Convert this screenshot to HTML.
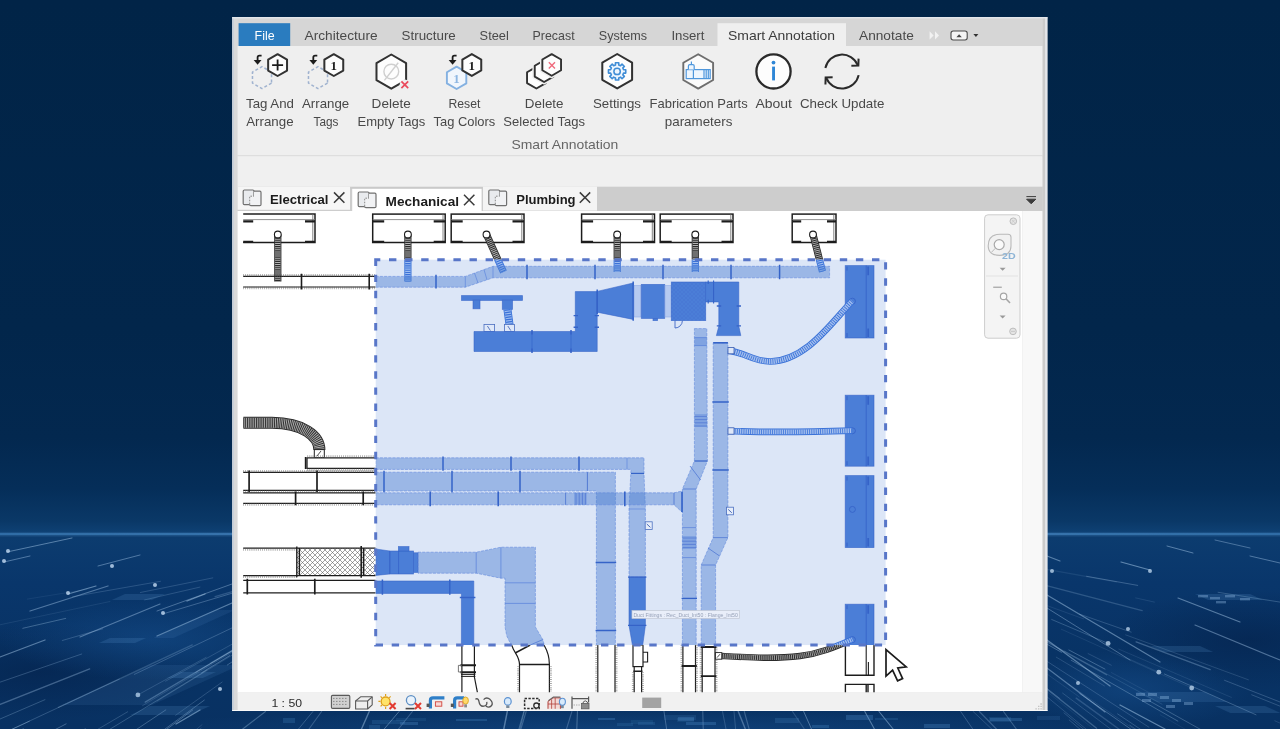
<!DOCTYPE html>
<html lang="en"><head><meta charset="utf-8"><title>Smart Annotation</title>
<style>
html,body{margin:0;padding:0;background:#03244a;overflow:hidden}
svg{display:block;font-family:"Liberation Sans", sans-serif}
</style></head><body>
<svg width="1280" height="729" viewBox="0 0 1280 729">
<defs>
<linearGradient id="bgv" x1="0" y1="0" x2="0" y2="1">
<stop offset="0" stop-color="#012447"/>
<stop offset="0.45" stop-color="#02264b"/>
<stop offset="0.60" stop-color="#03284f"/>
<stop offset="0.67" stop-color="#052e59"/>
<stop offset="0.715" stop-color="#0a3867"/>
<stop offset="0.729" stop-color="#0e4073"/>
<stop offset="0.7325" stop-color="#2a6298"/>
<stop offset="0.737" stop-color="#0c3c6f"/>
<stop offset="0.80" stop-color="#09366b"/>
<stop offset="0.9" stop-color="#083365"/>
<stop offset="1" stop-color="#083162"/>
</linearGradient>
<linearGradient id="hz" x1="0" y1="0" x2="1" y2="0">
<stop offset="0" stop-color="#3f86c4" stop-opacity="0.5"/>
<stop offset="0.5" stop-color="#5a9bd4" stop-opacity="0.7"/>
<stop offset="1" stop-color="#3f86c4" stop-opacity="0.5"/>
</linearGradient>
<radialGradient id="dk" cx="0.5" cy="0.5" r="0.5">
<stop offset="0" stop-color="#04214a" stop-opacity="0.6"/>
<stop offset="1" stop-color="#04214a" stop-opacity="0"/>
</radialGradient>
<radialGradient id="lt" cx="0.5" cy="0.5" r="0.5">
<stop offset="0" stop-color="#17508f" stop-opacity="0.5"/>
<stop offset="1" stop-color="#17508f" stop-opacity="0"/>
</radialGradient>
<filter id="b1"><feGaussianBlur stdDeviation="0.55"/></filter>
<filter id="b2"><feGaussianBlur stdDeviation="1.4"/></filter>
</defs>
<rect x="0" y="0" width="1280" height="729" fill="url(#bgv)"/>
<rect x="0" y="533.2" width="1280" height="1.6" fill="url(#hz)" filter="url(#b1)"/>
<ellipse cx="40" cy="672" rx="170" ry="48" fill="url(#dk)"/>
<ellipse cx="1250" cy="640" rx="150" ry="50" fill="url(#dk)"/>
<ellipse cx="150" cy="640" rx="150" ry="40" fill="url(#lt)"/>
<ellipse cx="1130" cy="690" rx="120" ry="40" fill="url(#lt)"/>
<ellipse cx="640" cy="729" rx="520" ry="20" fill="url(#lt)"/>
<g filter="url(#b1)"><line x1="192.3" y1="644.9" x2="58.4" y2="707.4" stroke="#a4c6e6" stroke-width="1.3" stroke-opacity="0.23" stroke-linecap="round"/><line x1="-126.8" y1="691.5" x2="-228.2" y2="720.2" stroke="#a4c6e6" stroke-width="1" stroke-opacity="0.13" stroke-linecap="round"/><line x1="-313.2" y1="692.6" x2="-452.5" y2="722.4" stroke="#a4c6e6" stroke-width="0.8" stroke-opacity="0.27" stroke-linecap="round"/><line x1="119.3" y1="679.1" x2="3.2" y2="733.3" stroke="#a4c6e6" stroke-width="0.8" stroke-opacity="0.33" stroke-linecap="round"/><circle cx="3.2" cy="733.3" r="1.6" fill="#c3dbf2" fill-opacity="0.75"/><line x1="244.3" y1="622.1" x2="134.3" y2="674.4" stroke="#a4c6e6" stroke-width="1" stroke-opacity="0.28" stroke-linecap="round"/><line x1="201.1" y1="728.2" x2="56.2" y2="851.1" stroke="#a4c6e6" stroke-width="1" stroke-opacity="0.19" stroke-linecap="round"/><line x1="44.9" y1="699.7" x2="-40.8" y2="736.6" stroke="#a4c6e6" stroke-width="0.8" stroke-opacity="0.34" stroke-linecap="round"/><circle cx="-40.8" cy="736.6" r="1.6" fill="#c3dbf2" fill-opacity="0.75"/><line x1="299.7" y1="618.2" x2="227.3" y2="665.0" stroke="#a4c6e6" stroke-width="1" stroke-opacity="0.32" stroke-linecap="round"/><line x1="110.0" y1="601.5" x2="-9.1" y2="626.7" stroke="#a4c6e6" stroke-width="0.8" stroke-opacity="0.14" stroke-linecap="round"/><line x1="-158.6" y1="626.8" x2="-237.9" y2="639.3" stroke="#a4c6e6" stroke-width="1" stroke-opacity="0.23" stroke-linecap="round"/><line x1="65.7" y1="618.4" x2="22.8" y2="628.3" stroke="#a4c6e6" stroke-width="1" stroke-opacity="0.34" stroke-linecap="round"/><line x1="85.5" y1="728.6" x2="56.6" y2="744.9" stroke="#a4c6e6" stroke-width="1" stroke-opacity="0.21" stroke-linecap="round"/><line x1="251.8" y1="587.3" x2="163.3" y2="613.8" stroke="#a4c6e6" stroke-width="1" stroke-opacity="0.33" stroke-linecap="round"/><line x1="212.8" y1="577.9" x2="140.4" y2="592.5" stroke="#a4c6e6" stroke-width="0.8" stroke-opacity="0.27" stroke-linecap="round"/><line x1="29.4" y1="721.2" x2="-78.5" y2="771.6" stroke="#a4c6e6" stroke-width="1" stroke-opacity="0.34" stroke-linecap="round"/><line x1="-258.3" y1="711.5" x2="-428.0" y2="755.3" stroke="#a4c6e6" stroke-width="1" stroke-opacity="0.30" stroke-linecap="round"/><line x1="244.0" y1="643.8" x2="145.2" y2="702.1" stroke="#a4c6e6" stroke-width="1.3" stroke-opacity="0.35" stroke-linecap="round"/><line x1="-59.0" y1="695.3" x2="-180.1" y2="735.3" stroke="#a4c6e6" stroke-width="1" stroke-opacity="0.25" stroke-linecap="round"/><line x1="229.8" y1="655.6" x2="201.7" y2="672.7" stroke="#a4c6e6" stroke-width="1" stroke-opacity="0.36" stroke-linecap="round"/><line x1="87.1" y1="589.4" x2="27.3" y2="599.1" stroke="#a4c6e6" stroke-width="0.8" stroke-opacity="0.11" stroke-linecap="round"/><line x1="66.1" y1="723.9" x2="25.0" y2="745.3" stroke="#a4c6e6" stroke-width="1" stroke-opacity="0.35" stroke-linecap="round"/><line x1="207.0" y1="670.0" x2="110.3" y2="729.0" stroke="#a4c6e6" stroke-width="1" stroke-opacity="0.27" stroke-linecap="round"/><line x1="-251.9" y1="652.3" x2="-283.8" y2="657.8" stroke="#a4c6e6" stroke-width="0.8" stroke-opacity="0.30" stroke-linecap="round"/><line x1="165.8" y1="709.9" x2="32.8" y2="798.5" stroke="#a4c6e6" stroke-width="1" stroke-opacity="0.32" stroke-linecap="round"/><line x1="89.7" y1="668.9" x2="-60.0" y2="728.2" stroke="#a4c6e6" stroke-width="1.3" stroke-opacity="0.36" stroke-linecap="round"/><circle cx="-60.0" cy="728.2" r="2.0" fill="#c3dbf2" fill-opacity="0.75"/><line x1="206.1" y1="657.4" x2="137.9" y2="694.9" stroke="#a4c6e6" stroke-width="0.8" stroke-opacity="0.27" stroke-linecap="round"/><circle cx="137.9" cy="694.9" r="2.4" fill="#c3dbf2" fill-opacity="0.75"/><line x1="199.9" y1="587.1" x2="144.6" y2="599.9" stroke="#a4c6e6" stroke-width="1" stroke-opacity="0.21" stroke-linecap="round"/><line x1="271.7" y1="622.1" x2="165.6" y2="681.2" stroke="#a4c6e6" stroke-width="0.8" stroke-opacity="0.25" stroke-linecap="round"/><line x1="271.7" y1="630.9" x2="157.1" y2="701.1" stroke="#a4c6e6" stroke-width="1" stroke-opacity="0.18" stroke-linecap="round"/><line x1="305.3" y1="570.4" x2="215.1" y2="596.7" stroke="#a4c6e6" stroke-width="1.3" stroke-opacity="0.24" stroke-linecap="round"/><line x1="222.1" y1="682.1" x2="175.6" y2="715.3" stroke="#a4c6e6" stroke-width="1" stroke-opacity="0.21" stroke-linecap="round"/><line x1="204.3" y1="700.1" x2="83.8" y2="788.8" stroke="#a4c6e6" stroke-width="1" stroke-opacity="0.33" stroke-linecap="round"/><circle cx="83.8" cy="788.8" r="2.0" fill="#c3dbf2" fill-opacity="0.75"/><line x1="262.8" y1="632.3" x2="210.6" y2="663.0" stroke="#a4c6e6" stroke-width="1.3" stroke-opacity="0.19" stroke-linecap="round"/><line x1="81.7" y1="654.0" x2="-30.8" y2="692.8" stroke="#a4c6e6" stroke-width="1" stroke-opacity="0.26" stroke-linecap="round"/><line x1="278.8" y1="623.3" x2="195.8" y2="672.3" stroke="#a4c6e6" stroke-width="1" stroke-opacity="0.37" stroke-linecap="round"/><line x1="102.7" y1="628.8" x2="62.3" y2="640.5" stroke="#a4c6e6" stroke-width="0.8" stroke-opacity="0.31" stroke-linecap="round"/><line x1="160.5" y1="581.3" x2="72.6" y2="596.7" stroke="#a4c6e6" stroke-width="1" stroke-opacity="0.21" stroke-linecap="round"/><line x1="127.6" y1="711.8" x2="44.9" y2="760.4" stroke="#a4c6e6" stroke-width="1" stroke-opacity="0.23" stroke-linecap="round"/><line x1="-53.6" y1="675.9" x2="-200.2" y2="718.9" stroke="#a4c6e6" stroke-width="0.8" stroke-opacity="0.16" stroke-linecap="round"/><line x1="202.0" y1="724.7" x2="101.9" y2="808.4" stroke="#a4c6e6" stroke-width="1" stroke-opacity="0.17" stroke-linecap="round"/><line x1="-193.8" y1="634.4" x2="-218.4" y2="638.4" stroke="#a4c6e6" stroke-width="1" stroke-opacity="0.25" stroke-linecap="round"/><line x1="-374.6" y1="690.8" x2="-428.2" y2="701.2" stroke="#a4c6e6" stroke-width="1" stroke-opacity="0.29" stroke-linecap="round"/><line x1="23.3" y1="729.0" x2="-159.0" y2="816.4" stroke="#a4c6e6" stroke-width="1.3" stroke-opacity="0.36" stroke-linecap="round"/><line x1="256.1" y1="637.9" x2="142.6" y2="705.6" stroke="#a4c6e6" stroke-width="1" stroke-opacity="0.19" stroke-linecap="round"/><line x1="192.7" y1="710.0" x2="140.5" y2="748.7" stroke="#a4c6e6" stroke-width="1" stroke-opacity="0.37" stroke-linecap="round"/><line x1="1088.1" y1="653.6" x2="1111.3" y2="665.2" stroke="#a4c6e6" stroke-width="0.8" stroke-opacity="0.24" stroke-linecap="round"/><line x1="1006.9" y1="645.5" x2="1079.2" y2="696.9" stroke="#a4c6e6" stroke-width="1" stroke-opacity="0.12" stroke-linecap="round"/><line x1="1274.8" y1="720.8" x2="1458.6" y2="801.6" stroke="#a4c6e6" stroke-width="1" stroke-opacity="0.17" stroke-linecap="round"/><line x1="1304.1" y1="710.1" x2="1486.3" y2="780.8" stroke="#a4c6e6" stroke-width="1.3" stroke-opacity="0.25" stroke-linecap="round"/><circle cx="1486.3" cy="780.8" r="2.0" fill="#c3dbf2" fill-opacity="0.75"/><line x1="1160.2" y1="714.7" x2="1204.9" y2="740.7" stroke="#a4c6e6" stroke-width="0.8" stroke-opacity="0.11" stroke-linecap="round"/><line x1="1218.1" y1="592.3" x2="1307.2" y2="606.4" stroke="#a4c6e6" stroke-width="1" stroke-opacity="0.27" stroke-linecap="round"/><circle cx="1307.2" cy="606.4" r="2.4" fill="#c3dbf2" fill-opacity="0.75"/><line x1="1149.0" y1="700.7" x2="1266.7" y2="766.3" stroke="#a4c6e6" stroke-width="1" stroke-opacity="0.30" stroke-linecap="round"/><line x1="1601.2" y1="658.9" x2="1742.4" y2="682.4" stroke="#a4c6e6" stroke-width="1" stroke-opacity="0.25" stroke-linecap="round"/><line x1="1068.9" y1="650.0" x2="1105.0" y2="669.1" stroke="#a4c6e6" stroke-width="1" stroke-opacity="0.35" stroke-linecap="round"/><line x1="1336.5" y1="714.2" x2="1400.1" y2="737.8" stroke="#a4c6e6" stroke-width="1" stroke-opacity="0.35" stroke-linecap="round"/><line x1="1299.6" y1="676.8" x2="1361.8" y2="696.5" stroke="#a4c6e6" stroke-width="0.8" stroke-opacity="0.22" stroke-linecap="round"/><line x1="1111.4" y1="672.6" x2="1160.0" y2="698.4" stroke="#a4c6e6" stroke-width="0.8" stroke-opacity="0.13" stroke-linecap="round"/><line x1="1251.7" y1="694.8" x2="1332.8" y2="727.3" stroke="#a4c6e6" stroke-width="1" stroke-opacity="0.24" stroke-linecap="round"/><line x1="1470.7" y1="643.4" x2="1560.3" y2="659.2" stroke="#a4c6e6" stroke-width="1.3" stroke-opacity="0.14" stroke-linecap="round"/><line x1="1411.9" y1="698.5" x2="1600.6" y2="753.7" stroke="#a4c6e6" stroke-width="0.8" stroke-opacity="0.26" stroke-linecap="round"/><line x1="1051.7" y1="619.5" x2="1108.1" y2="643.4" stroke="#a4c6e6" stroke-width="1" stroke-opacity="0.27" stroke-linecap="round"/><circle cx="1108.1" cy="643.4" r="2.4" fill="#c3dbf2" fill-opacity="0.75"/><line x1="1086.6" y1="576.3" x2="1137.7" y2="585.4" stroke="#a4c6e6" stroke-width="1" stroke-opacity="0.31" stroke-linecap="round"/><line x1="1935.9" y1="708.6" x2="2104.3" y2="735.7" stroke="#a4c6e6" stroke-width="1.3" stroke-opacity="0.26" stroke-linecap="round"/><line x1="973.6" y1="603.1" x2="1061.5" y2="652.3" stroke="#a4c6e6" stroke-width="1" stroke-opacity="0.36" stroke-linecap="round"/><line x1="1079.8" y1="693.6" x2="1157.3" y2="747.5" stroke="#a4c6e6" stroke-width="1" stroke-opacity="0.35" stroke-linecap="round"/><line x1="1068.5" y1="684.2" x2="1143.5" y2="735.7" stroke="#a4c6e6" stroke-width="1" stroke-opacity="0.12" stroke-linecap="round"/><line x1="1056.3" y1="657.2" x2="1104.4" y2="685.9" stroke="#a4c6e6" stroke-width="1" stroke-opacity="0.19" stroke-linecap="round"/><line x1="1042.9" y1="639.8" x2="1106.6" y2="674.8" stroke="#a4c6e6" stroke-width="1.3" stroke-opacity="0.28" stroke-linecap="round"/><line x1="1129.8" y1="725.2" x2="1157.5" y2="744.1" stroke="#a4c6e6" stroke-width="0.8" stroke-opacity="0.31" stroke-linecap="round"/><line x1="989.1" y1="643.1" x2="1059.9" y2="698.5" stroke="#a4c6e6" stroke-width="0.8" stroke-opacity="0.28" stroke-linecap="round"/><line x1="1431.0" y1="652.1" x2="1557.8" y2="677.9" stroke="#a4c6e6" stroke-width="0.8" stroke-opacity="0.21" stroke-linecap="round"/><line x1="1300.5" y1="723.3" x2="1475.5" y2="796.8" stroke="#a4c6e6" stroke-width="0.8" stroke-opacity="0.22" stroke-linecap="round"/><line x1="1079.5" y1="614.1" x2="1131.1" y2="632.1" stroke="#a4c6e6" stroke-width="1" stroke-opacity="0.24" stroke-linecap="round"/><line x1="1013.3" y1="664.7" x2="1118.9" y2="749.3" stroke="#a4c6e6" stroke-width="0.8" stroke-opacity="0.10" stroke-linecap="round"/><line x1="1038.4" y1="567.9" x2="1116.3" y2="581.9" stroke="#a4c6e6" stroke-width="1.3" stroke-opacity="0.11" stroke-linecap="round"/><line x1="1118.7" y1="649.1" x2="1231.4" y2="697.4" stroke="#a4c6e6" stroke-width="1" stroke-opacity="0.12" stroke-linecap="round"/><line x1="1061.3" y1="629.2" x2="1191.7" y2="688.0" stroke="#a4c6e6" stroke-width="1" stroke-opacity="0.11" stroke-linecap="round"/><circle cx="1191.7" cy="688.0" r="2.4" fill="#c3dbf2" fill-opacity="0.75"/><line x1="1281.9" y1="672.9" x2="1312.1" y2="682.6" stroke="#a4c6e6" stroke-width="1.3" stroke-opacity="0.23" stroke-linecap="round"/><line x1="1412.5" y1="638.9" x2="1448.9" y2="645.7" stroke="#a4c6e6" stroke-width="1.3" stroke-opacity="0.14" stroke-linecap="round"/><line x1="1071.1" y1="660.2" x2="1177.8" y2="721.1" stroke="#a4c6e6" stroke-width="1" stroke-opacity="0.32" stroke-linecap="round"/><line x1="1069.2" y1="720.0" x2="1195.1" y2="826.7" stroke="#a4c6e6" stroke-width="1" stroke-opacity="0.23" stroke-linecap="round"/><line x1="1125.7" y1="634.9" x2="1248.4" y2="679.8" stroke="#a4c6e6" stroke-width="1" stroke-opacity="0.18" stroke-linecap="round"/><line x1="1064.5" y1="651.0" x2="1162.0" y2="704.2" stroke="#a4c6e6" stroke-width="1" stroke-opacity="0.15" stroke-linecap="round"/><line x1="1064.0" y1="712.9" x2="1207.7" y2="833.0" stroke="#a4c6e6" stroke-width="0.8" stroke-opacity="0.28" stroke-linecap="round"/><circle cx="1207.7" cy="833.0" r="2.0" fill="#c3dbf2" fill-opacity="0.75"/><line x1="1124.9" y1="657.1" x2="1158.8" y2="672.2" stroke="#a4c6e6" stroke-width="1" stroke-opacity="0.12" stroke-linecap="round"/><circle cx="1158.8" cy="672.2" r="2.4" fill="#c3dbf2" fill-opacity="0.75"/><line x1="1036.0" y1="582.8" x2="1142.2" y2="610.7" stroke="#a4c6e6" stroke-width="1.3" stroke-opacity="0.23" stroke-linecap="round"/><line x1="1224.5" y1="680.3" x2="1372.4" y2="738.1" stroke="#a4c6e6" stroke-width="0.8" stroke-opacity="0.32" stroke-linecap="round"/><line x1="1076.2" y1="698.1" x2="1204.4" y2="791.1" stroke="#a4c6e6" stroke-width="1.3" stroke-opacity="0.22" stroke-linecap="round"/><line x1="1117.6" y1="713.9" x2="1205.4" y2="772.9" stroke="#a4c6e6" stroke-width="1" stroke-opacity="0.26" stroke-linecap="round"/><line x1="1136.1" y1="641.8" x2="1210.2" y2="669.7" stroke="#a4c6e6" stroke-width="1.3" stroke-opacity="0.33" stroke-linecap="round"/><line x1="1001.5" y1="653.3" x2="1096.6" y2="728.2" stroke="#a4c6e6" stroke-width="1.3" stroke-opacity="0.30" stroke-linecap="round"/><line x1="1024.4" y1="646.7" x2="1148.9" y2="727.2" stroke="#a4c6e6" stroke-width="1" stroke-opacity="0.22" stroke-linecap="round"/><line x1="1028.0" y1="598.7" x2="1083.7" y2="618.9" stroke="#a4c6e6" stroke-width="1" stroke-opacity="0.12" stroke-linecap="round"/><line x1="1648.8" y1="667.3" x2="1759.3" y2="685.7" stroke="#a4c6e6" stroke-width="1" stroke-opacity="0.31" stroke-linecap="round"/><line x1="1062.6" y1="693.1" x2="1113.1" y2="730.9" stroke="#a4c6e6" stroke-width="0.8" stroke-opacity="0.25" stroke-linecap="round"/><line x1="1005.3" y1="662.4" x2="1115.0" y2="753.0" stroke="#a4c6e6" stroke-width="0.8" stroke-opacity="0.26" stroke-linecap="round"/><line x1="1135.7" y1="597.9" x2="1154.4" y2="602.1" stroke="#a4c6e6" stroke-width="1" stroke-opacity="0.13" stroke-linecap="round"/><line x1="1164.4" y1="674.0" x2="1256.0" y2="714.8" stroke="#a4c6e6" stroke-width="1" stroke-opacity="0.31" stroke-linecap="round"/><line x1="1338.9" y1="722.9" x2="1483.6" y2="778.9" stroke="#a4c6e6" stroke-width="1.3" stroke-opacity="0.24" stroke-linecap="round"/><line x1="72.0" y1="538.0" x2="7.0" y2="552.0" stroke="#a4c6e6" stroke-width="1" stroke-opacity="0.50" stroke-linecap="round"/><line x1="30.0" y1="556.0" x2="4.0" y2="562.0" stroke="#a4c6e6" stroke-width="1" stroke-opacity="0.45" stroke-linecap="round"/><line x1="140.0" y1="555.0" x2="98.0" y2="566.0" stroke="#a4c6e6" stroke-width="1" stroke-opacity="0.45" stroke-linecap="round"/><line x1="96.0" y1="586.0" x2="68.0" y2="594.0" stroke="#a4c6e6" stroke-width="1.2" stroke-opacity="0.55" stroke-linecap="round"/><line x1="108.0" y1="586.0" x2="30.0" y2="611.0" stroke="#a4c6e6" stroke-width="1.3" stroke-opacity="0.45" stroke-linecap="round"/><line x1="232.0" y1="584.0" x2="157.0" y2="611.0" stroke="#a4c6e6" stroke-width="1" stroke-opacity="0.40" stroke-linecap="round"/><line x1="205.0" y1="594.0" x2="187.0" y2="601.0" stroke="#a4c6e6" stroke-width="1.3" stroke-opacity="0.55" stroke-linecap="round"/><line x1="232.0" y1="603.0" x2="157.0" y2="636.0" stroke="#a4c6e6" stroke-width="1.3" stroke-opacity="0.50" stroke-linecap="round"/><line x1="160.0" y1="604.0" x2="80.0" y2="637.0" stroke="#a4c6e6" stroke-width="1.2" stroke-opacity="0.45" stroke-linecap="round"/><line x1="45.0" y1="640.0" x2="0.0" y2="657.0" stroke="#a4c6e6" stroke-width="1.3" stroke-opacity="0.50" stroke-linecap="round"/><line x1="200.0" y1="710.0" x2="176.0" y2="724.0" stroke="#a4c6e6" stroke-width="1.3" stroke-opacity="0.55" stroke-linecap="round"/><circle cx="8.0" cy="551.0" r="2.0" fill="#c3dbf2" fill-opacity="0.8"/><circle cx="4.0" cy="561.0" r="2.0" fill="#c3dbf2" fill-opacity="0.8"/><circle cx="112.0" cy="566.0" r="2.0" fill="#c3dbf2" fill-opacity="0.8"/><circle cx="68.0" cy="593.0" r="2.0" fill="#c3dbf2" fill-opacity="0.8"/><circle cx="155.0" cy="585.0" r="2.0" fill="#c3dbf2" fill-opacity="0.8"/><circle cx="163.0" cy="613.0" r="2.0" fill="#c3dbf2" fill-opacity="0.8"/><circle cx="220.0" cy="689.0" r="2.0" fill="#c3dbf2" fill-opacity="0.8"/><line x1="1167.0" y1="546.0" x2="1193.0" y2="553.0" stroke="#a4c6e6" stroke-width="1" stroke-opacity="0.50" stroke-linecap="round"/><line x1="1121.0" y1="562.0" x2="1150.0" y2="570.0" stroke="#a4c6e6" stroke-width="1.2" stroke-opacity="0.55" stroke-linecap="round"/><line x1="1047.0" y1="556.0" x2="1060.0" y2="561.0" stroke="#a4c6e6" stroke-width="1.2" stroke-opacity="0.50" stroke-linecap="round"/><line x1="1047.0" y1="595.0" x2="1160.0" y2="662.0" stroke="#a4c6e6" stroke-width="1.2" stroke-opacity="0.50" stroke-linecap="round"/><line x1="1047.0" y1="608.0" x2="1130.0" y2="660.0" stroke="#a4c6e6" stroke-width="1" stroke-opacity="0.40" stroke-linecap="round"/><line x1="1178.0" y1="598.0" x2="1240.0" y2="622.0" stroke="#a4c6e6" stroke-width="1.2" stroke-opacity="0.50" stroke-linecap="round"/><line x1="1195.0" y1="625.0" x2="1280.0" y2="660.0" stroke="#a4c6e6" stroke-width="1.2" stroke-opacity="0.45" stroke-linecap="round"/><line x1="1047.0" y1="640.0" x2="1110.0" y2="686.0" stroke="#a4c6e6" stroke-width="1.3" stroke-opacity="0.50" stroke-linecap="round"/><line x1="1047.0" y1="668.0" x2="1105.0" y2="712.0" stroke="#a4c6e6" stroke-width="1.2" stroke-opacity="0.45" stroke-linecap="round"/><line x1="1120.0" y1="705.0" x2="1165.0" y2="729.0" stroke="#a4c6e6" stroke-width="1.3" stroke-opacity="0.55" stroke-linecap="round"/><line x1="1250.0" y1="556.0" x2="1280.0" y2="563.0" stroke="#a4c6e6" stroke-width="1" stroke-opacity="0.45" stroke-linecap="round"/><line x1="1215.0" y1="540.0" x2="1250.0" y2="548.0" stroke="#a4c6e6" stroke-width="1" stroke-opacity="0.40" stroke-linecap="round"/><circle cx="1150.0" cy="571.0" r="2.0" fill="#c3dbf2" fill-opacity="0.75"/><circle cx="1128.0" cy="629.0" r="2.0" fill="#c3dbf2" fill-opacity="0.75"/><circle cx="1078.0" cy="683.0" r="2.0" fill="#c3dbf2" fill-opacity="0.75"/><circle cx="1052.0" cy="571.0" r="2.0" fill="#c3dbf2" fill-opacity="0.75"/><polygon points="125,594 165,594 151.8,600 111.8,600" fill="#6aa6de" fill-opacity="0.16"/><polygon points="110,638 146,638 135.0,643 99.0,643" fill="#6aa6de" fill-opacity="0.16"/><polygon points="150,665 240,665 152.0,705 62.0,705" fill="#6aa6de" fill-opacity="0.1"/><polygon points="180,672 216,672 202.8,678 166.8,678" fill="#6aa6de" fill-opacity="0.16"/><polygon points="150,706 210,706 190.2,715 130.2,715" fill="#6aa6de" fill-opacity="0.16"/><polygon points="215,610 235,610 173.4,638 153.4,638" fill="#6aa6de" fill-opacity="0.1"/><polygon points="1195,594 1250,594 1263.2,600 1208.2,600" fill="#6aa6de" fill-opacity="0.16"/><polygon points="1150,646 1200,646 1213.2,652 1163.2,652" fill="#6aa6de" fill-opacity="0.16"/><polygon points="1135,692 1205,692 1227.0,702 1157.0,702" fill="#6aa6de" fill-opacity="0.14"/><polygon points="1215,706 1265,706 1280.4,713 1230.4,713" fill="#6aa6de" fill-opacity="0.16"/><rect x="1136" y="693" width="9" height="3" fill="#9cc4ea" fill-opacity="0.35"/><rect x="1148" y="693" width="9" height="3" fill="#9cc4ea" fill-opacity="0.35"/><rect x="1160" y="696" width="9" height="3" fill="#9cc4ea" fill-opacity="0.35"/><rect x="1172" y="699" width="9" height="3" fill="#9cc4ea" fill-opacity="0.35"/><rect x="1142" y="699" width="9" height="3" fill="#9cc4ea" fill-opacity="0.35"/><rect x="1184" y="702" width="9" height="3" fill="#9cc4ea" fill-opacity="0.35"/><rect x="1166" y="705" width="9" height="3" fill="#9cc4ea" fill-opacity="0.35"/><rect x="1198" y="595" width="10" height="2.4" fill="#9cc4ea" fill-opacity="0.35"/><rect x="1210" y="597" width="10" height="2.4" fill="#9cc4ea" fill-opacity="0.35"/><rect x="1225" y="595" width="10" height="2.4" fill="#9cc4ea" fill-opacity="0.35"/><rect x="1240" y="598" width="10" height="2.4" fill="#9cc4ea" fill-opacity="0.35"/><rect x="1216" y="601" width="10" height="2.4" fill="#9cc4ea" fill-opacity="0.35"/><line x1="738.3" y1="711.5" x2="745.3" y2="729.0" stroke="#a4c6e6" stroke-width="1.4" stroke-opacity="0.40" stroke-linecap="round"/><line x1="664.0" y1="711.5" x2="666.6" y2="729.0" stroke="#a4c6e6" stroke-width="0.9" stroke-opacity="0.39" stroke-linecap="round"/><line x1="960.7" y1="711.5" x2="972.7" y2="729.0" stroke="#a4c6e6" stroke-width="0.9" stroke-opacity="0.31" stroke-linecap="round"/><line x1="321.6" y1="711.5" x2="309.0" y2="729.0" stroke="#a4c6e6" stroke-width="1.1" stroke-opacity="0.28" stroke-linecap="round"/><line x1="973.1" y1="711.5" x2="991.7" y2="729.0" stroke="#a4c6e6" stroke-width="0.9" stroke-opacity="0.24" stroke-linecap="round"/><line x1="734.0" y1="711.5" x2="735.6" y2="729.0" stroke="#a4c6e6" stroke-width="0.9" stroke-opacity="0.26" stroke-linecap="round"/><line x1="412.4" y1="711.5" x2="398.5" y2="729.0" stroke="#a4c6e6" stroke-width="1.1" stroke-opacity="0.29" stroke-linecap="round"/><line x1="399.1" y1="711.5" x2="384.2" y2="729.0" stroke="#a4c6e6" stroke-width="0.9" stroke-opacity="0.48" stroke-linecap="round"/><line x1="792.5" y1="711.5" x2="804.3" y2="729.0" stroke="#a4c6e6" stroke-width="1.1" stroke-opacity="0.21" stroke-linecap="round"/><line x1="571.9" y1="711.5" x2="566.5" y2="729.0" stroke="#a4c6e6" stroke-width="1.1" stroke-opacity="0.29" stroke-linecap="round"/><line x1="722.5" y1="711.5" x2="726.0" y2="729.0" stroke="#a4c6e6" stroke-width="1.1" stroke-opacity="0.22" stroke-linecap="round"/><line x1="524.3" y1="711.5" x2="519.9" y2="729.0" stroke="#a4c6e6" stroke-width="0.9" stroke-opacity="0.34" stroke-linecap="round"/><line x1="803.7" y1="711.5" x2="811.5" y2="729.0" stroke="#a4c6e6" stroke-width="0.9" stroke-opacity="0.48" stroke-linecap="round"/><line x1="526.1" y1="711.5" x2="520.9" y2="729.0" stroke="#a4c6e6" stroke-width="1.1" stroke-opacity="0.31" stroke-linecap="round"/><line x1="702.8" y1="711.5" x2="703.2" y2="729.0" stroke="#a4c6e6" stroke-width="0.9" stroke-opacity="0.39" stroke-linecap="round"/><line x1="1003.5" y1="711.5" x2="1016.3" y2="729.0" stroke="#a4c6e6" stroke-width="1.1" stroke-opacity="0.30" stroke-linecap="round"/><line x1="523.8" y1="711.5" x2="518.9" y2="729.0" stroke="#a4c6e6" stroke-width="0.9" stroke-opacity="0.38" stroke-linecap="round"/><line x1="864.8" y1="711.5" x2="874.4" y2="729.0" stroke="#a4c6e6" stroke-width="1.1" stroke-opacity="0.48" stroke-linecap="round"/><line x1="312.9" y1="711.5" x2="298.5" y2="729.0" stroke="#a4c6e6" stroke-width="0.9" stroke-opacity="0.30" stroke-linecap="round"/><line x1="979.4" y1="711.5" x2="996.4" y2="729.0" stroke="#a4c6e6" stroke-width="1.1" stroke-opacity="0.29" stroke-linecap="round"/><line x1="879.0" y1="711.5" x2="893.1" y2="729.0" stroke="#a4c6e6" stroke-width="1.1" stroke-opacity="0.50" stroke-linecap="round"/><line x1="369.2" y1="711.5" x2="361.5" y2="729.0" stroke="#a4c6e6" stroke-width="1.4" stroke-opacity="0.48" stroke-linecap="round"/><line x1="265.5" y1="711.5" x2="242.7" y2="729.0" stroke="#a4c6e6" stroke-width="1.1" stroke-opacity="0.34" stroke-linecap="round"/><line x1="577.4" y1="711.5" x2="576.8" y2="729.0" stroke="#a4c6e6" stroke-width="0.9" stroke-opacity="0.44" stroke-linecap="round"/><line x1="507.3" y1="711.5" x2="503.8" y2="729.0" stroke="#a4c6e6" stroke-width="1.4" stroke-opacity="0.48" stroke-linecap="round"/><line x1="744.3" y1="711.5" x2="749.1" y2="729.0" stroke="#a4c6e6" stroke-width="1.1" stroke-opacity="0.31" stroke-linecap="round"/><rect x="283" y="718" width="12" height="5" fill="#4f8fcc" fill-opacity="0.23"/><rect x="372" y="720" width="33" height="4" fill="#4f8fcc" fill-opacity="0.18"/><rect x="456" y="719" width="31" height="2" fill="#4f8fcc" fill-opacity="0.27"/><rect x="664" y="715" width="32" height="5" fill="#4f8fcc" fill-opacity="0.15"/><rect x="631" y="720" width="22" height="4" fill="#4f8fcc" fill-opacity="0.13"/><rect x="875" y="718" width="23" height="2" fill="#4f8fcc" fill-opacity="0.18"/><rect x="686" y="722" width="30" height="3" fill="#4f8fcc" fill-opacity="0.30"/><rect x="812" y="725" width="17" height="3" fill="#4f8fcc" fill-opacity="0.27"/><rect x="617" y="723" width="16" height="3" fill="#4f8fcc" fill-opacity="0.17"/><rect x="638" y="722" width="17" height="3" fill="#4f8fcc" fill-opacity="0.18"/><rect x="990" y="718" width="32" height="3" fill="#4f8fcc" fill-opacity="0.28"/><rect x="598" y="718" width="17" height="2" fill="#4f8fcc" fill-opacity="0.30"/><rect x="396" y="718" width="30" height="3" fill="#4f8fcc" fill-opacity="0.13"/><rect x="775" y="718" width="24" height="5" fill="#4f8fcc" fill-opacity="0.21"/><rect x="989" y="717" width="22" height="5" fill="#4f8fcc" fill-opacity="0.17"/><rect x="1037" y="716" width="23" height="4" fill="#4f8fcc" fill-opacity="0.15"/><rect x="846" y="715" width="27" height="5" fill="#4f8fcc" fill-opacity="0.30"/><rect x="369" y="725" width="11" height="5" fill="#4f8fcc" fill-opacity="0.21"/><rect x="677" y="718" width="17" height="4" fill="#4f8fcc" fill-opacity="0.13"/><rect x="400" y="722" width="18" height="3" fill="#4f8fcc" fill-opacity="0.29"/><rect x="924" y="724" width="26" height="4" fill="#4f8fcc" fill-opacity="0.29"/><rect x="678" y="717" width="16" height="4" fill="#4f8fcc" fill-opacity="0.29"/></g>
<defs><filter id="soft" x="-2%" y="-2%" width="104%" height="104%"><feGaussianBlur stdDeviation="0.65"/></filter></defs>
<g filter="url(#soft)">
<g id="window">
<rect x="232.2" y="17.1" width="815.2" height="693.9" fill="#d9d9d9"/>
<rect x="232.2" y="17.1" width="1.8" height="693.9" fill="#c9d1db"/>
<rect x="1042.4" y="17.1" width="2.8" height="693.9" fill="#cbcbcb"/>
<rect x="1045.2" y="17.1" width="2.2" height="693.9" fill="#e4e6ea"/>
<rect x="237.6" y="17.1" width="804.8" height="28.9" fill="#d6d6d6"/>
<rect x="232.2" y="17.1" width="815.2" height="1.3" fill="#e4e8ee"/>
<rect x="238.6" y="23.2" width="51.6" height="22.8" fill="#2b7cbf"/>
<rect x="717.5" y="23.2" width="128.5" height="23" fill="#efefef"/>
<rect x="237.6" y="46" width="804.8" height="109.6" fill="#efefef"/>
<rect x="237.6" y="155.2" width="804.8" height="1" fill="#dcdcdc"/>
<rect x="237.6" y="156.2" width="804.8" height="30.6" fill="#f0f0f0"/>
<rect x="237.6" y="186.8" width="804.8" height="24.4" fill="#cdcdcd"/>
<rect x="237.6" y="186.6" width="112.4" height="23.2" fill="#f6f6f6"/>
<rect x="483" y="186.6" width="114" height="24" fill="#f4f4f4"/>
<rect x="352.2" y="188.4" width="129.4" height="23" fill="#ffffff"/>
<rect x="351.4" y="187.6" width="131" height="1" fill="#c4c4c4"/>
<rect x="237.6" y="211" width="784.8" height="481.6" fill="#ffffff"/>
<rect x="1022.4" y="211" width="20" height="481.6" fill="#f8f8f8"/>
<rect x="237.6" y="692.4" width="804.8" height="18.6" fill="#f1f1f1"/>
<rect x="232.2" y="710" width="815.2" height="1" fill="#fafafa"/>
<text x="254.6" y="40.4" font-size="13.4" fill="#ffffff" font-weight="normal" text-anchor="start" textLength="20.0" lengthAdjust="spacingAndGlyphs">File</text>
<text x="304.6" y="40.4" font-size="13.4" fill="#4a4a4a" font-weight="normal" text-anchor="start" textLength="73.0" lengthAdjust="spacingAndGlyphs">Architecture</text>
<text x="401.6" y="40.4" font-size="13.4" fill="#4a4a4a" font-weight="normal" text-anchor="start" textLength="54.2" lengthAdjust="spacingAndGlyphs">Structure</text>
<text x="479.6" y="40.4" font-size="13.4" fill="#4a4a4a" font-weight="normal" text-anchor="start" textLength="29.2" lengthAdjust="spacingAndGlyphs">Steel</text>
<text x="532.6" y="40.4" font-size="13.4" fill="#4a4a4a" font-weight="normal" text-anchor="start" textLength="42.0" lengthAdjust="spacingAndGlyphs">Precast</text>
<text x="598.8" y="40.4" font-size="13.4" fill="#4a4a4a" font-weight="normal" text-anchor="start" textLength="48.2" lengthAdjust="spacingAndGlyphs">Systems</text>
<text x="671.4" y="40.4" font-size="13.4" fill="#4a4a4a" font-weight="normal" text-anchor="start" textLength="33.0" lengthAdjust="spacingAndGlyphs">Insert</text>
<text x="728.0" y="40.4" font-size="13.4" fill="#3c3c3c" font-weight="normal" text-anchor="start" textLength="107.0" lengthAdjust="spacingAndGlyphs">Smart Annotation</text>
<text x="859.0" y="40.4" font-size="13.4" fill="#4a4a4a" font-weight="normal" text-anchor="start" textLength="54.8" lengthAdjust="spacingAndGlyphs">Annotate</text>
<path d="M929.6 31.2 l4 4.2 l-4 4.2 z M935 31.2 l4 4.2 l-4 4.2 z" fill="#f2f2f2"/>
<rect x="951" y="31" width="16.2" height="9" rx="2.2" fill="#f4f4f4" stroke="#4a4a4a" stroke-width="1.1"/>
<path d="M956.4 37.2 l2.7 -3 l2.7 3 z" fill="#444"/>
<path d="M973.4 34 h5 l-2.5 3 z" fill="#333"/>
<rect x="243.2" y="190" width="10.8" height="14.6" rx="1.2" fill="#e9ebee" stroke="#707070" stroke-width="1.2"/>
<path d="M254.0 191.2 H261.0 V205.6 H249.7 V196.2 H254.0 Z" fill="#f1f2f4"/>
<path d="M254.0 191.2 H259.8 q1.2 0 1.2 1.2 V204.4 q0 1.2 -1.2 1.2 H250.9 q-1.2 0 -1.2 -1.2" fill="none" stroke="#707070" stroke-width="1.2"/>
<path d="M249.7 204.2 V196.2 H254.0" stroke="#8a8a8a" stroke-width="1" stroke-dasharray="1.6 1.3" fill="none"/>
<text x="270.0" y="203.8" font-size="13.6" fill="#1a1a1a" font-weight="bold" text-anchor="start" textLength="58.4" lengthAdjust="spacingAndGlyphs">Electrical</text>
<path d="M334 192.4 l10.4 10.4 M344.4 192.4 l-10.4 10.4" stroke="#3a3a3a" stroke-width="1.5" fill="none"/>
<rect x="358.2" y="192" width="10.8" height="14.6" rx="1.2" fill="#e9ebee" stroke="#707070" stroke-width="1.2"/>
<path d="M369.0 193.2 H376.0 V207.6 H364.7 V198.2 H369.0 Z" fill="#f1f2f4"/>
<path d="M369.0 193.2 H374.8 q1.2 0 1.2 1.2 V206.4 q0 1.2 -1.2 1.2 H365.9 q-1.2 0 -1.2 -1.2" fill="none" stroke="#707070" stroke-width="1.2"/>
<path d="M364.7 206.2 V198.2 H369.0" stroke="#8a8a8a" stroke-width="1" stroke-dasharray="1.6 1.3" fill="none"/>
<text x="385.6" y="206.0" font-size="13.6" fill="#1a1a1a" font-weight="bold" text-anchor="start" textLength="73.4" lengthAdjust="spacingAndGlyphs">Mechanical</text>
<path d="M464 194.8 l10.4 10.4 M474.4 194.8 l-10.4 10.4" stroke="#3a3a3a" stroke-width="1.5" fill="none"/>
<rect x="488.8" y="190" width="10.8" height="14.6" rx="1.2" fill="#e9ebee" stroke="#707070" stroke-width="1.2"/>
<path d="M499.6 191.2 H506.6 V205.6 H495.3 V196.2 H499.6 Z" fill="#f1f2f4"/>
<path d="M499.6 191.2 H505.4 q1.2 0 1.2 1.2 V204.4 q0 1.2 -1.2 1.2 H496.5 q-1.2 0 -1.2 -1.2" fill="none" stroke="#707070" stroke-width="1.2"/>
<path d="M495.3 204.2 V196.2 H499.6" stroke="#8a8a8a" stroke-width="1" stroke-dasharray="1.6 1.3" fill="none"/>
<text x="516.2" y="203.8" font-size="13.6" fill="#1a1a1a" font-weight="bold" text-anchor="start" textLength="59.4" lengthAdjust="spacingAndGlyphs">Plumbing</text>
<path d="M579.8 192.4 l10.4 10.4 M590.1999999999999 192.4 l-10.4 10.4" stroke="#3a3a3a" stroke-width="1.5" fill="none"/>
<path d="M1026.4 196.6 h9.6 M1026.6 199.2 h9.2 l-4.6 4.6 z" stroke="#3a3a3a" stroke-width="1" fill="#3a3a3a"/>
</g>
<g id="ribbon">
<text x="246.0" y="107.8" font-size="12.6" fill="#484848" font-weight="normal" text-anchor="start" textLength="48.0" lengthAdjust="spacingAndGlyphs">Tag And</text>
<text x="246.2" y="126.3" font-size="12.6" fill="#484848" font-weight="normal" text-anchor="start" textLength="47.4" lengthAdjust="spacingAndGlyphs">Arrange</text>
<text x="302.0" y="107.8" font-size="12.6" fill="#484848" font-weight="normal" text-anchor="start" textLength="47.2" lengthAdjust="spacingAndGlyphs">Arrange</text>
<text x="313.6" y="126.3" font-size="12.6" fill="#484848" font-weight="normal" text-anchor="start" textLength="24.9" lengthAdjust="spacingAndGlyphs">Tags</text>
<text x="371.6" y="107.8" font-size="12.6" fill="#484848" font-weight="normal" text-anchor="start" textLength="39.2" lengthAdjust="spacingAndGlyphs">Delete</text>
<text x="357.5" y="126.3" font-size="12.6" fill="#484848" font-weight="normal" text-anchor="start" textLength="67.8" lengthAdjust="spacingAndGlyphs">Empty Tags</text>
<text x="448.5" y="107.8" font-size="12.6" fill="#484848" font-weight="normal" text-anchor="start" textLength="31.9" lengthAdjust="spacingAndGlyphs">Reset</text>
<text x="433.5" y="126.3" font-size="12.6" fill="#484848" font-weight="normal" text-anchor="start" textLength="61.7" lengthAdjust="spacingAndGlyphs">Tag Colors</text>
<text x="524.8" y="107.8" font-size="12.6" fill="#484848" font-weight="normal" text-anchor="start" textLength="38.7" lengthAdjust="spacingAndGlyphs">Delete</text>
<text x="503.3" y="126.3" font-size="12.6" fill="#484848" font-weight="normal" text-anchor="start" textLength="81.7" lengthAdjust="spacingAndGlyphs">Selected Tags</text>
<text x="593.0" y="107.8" font-size="12.6" fill="#484848" font-weight="normal" text-anchor="start" textLength="48.0" lengthAdjust="spacingAndGlyphs">Settings</text>
<text x="649.5" y="107.8" font-size="12.6" fill="#484848" font-weight="normal" text-anchor="start" textLength="98.2" lengthAdjust="spacingAndGlyphs">Fabrication Parts</text>
<text x="664.8" y="126.3" font-size="12.6" fill="#484848" font-weight="normal" text-anchor="start" textLength="67.6" lengthAdjust="spacingAndGlyphs">parameters</text>
<text x="755.4" y="107.8" font-size="12.6" fill="#484848" font-weight="normal" text-anchor="start" textLength="36.6" lengthAdjust="spacingAndGlyphs">About</text>
<text x="799.9" y="107.8" font-size="12.6" fill="#484848" font-weight="normal" text-anchor="start" textLength="84.5" lengthAdjust="spacingAndGlyphs">Check Update</text>
<text x="511.4" y="149.2" font-size="12.6" fill="#666666" font-weight="normal" text-anchor="start" textLength="106.9" lengthAdjust="spacingAndGlyphs">Smart Annotation</text>
<polygon points="271.53,83.10 262.00,88.60 252.47,83.10 252.47,72.10 262.00,66.60 271.53,72.10" fill="none" stroke="#9fb2cf" stroke-width="1.5" stroke-linejoin="round" stroke-dasharray="3 2.2"/>
<polygon points="287.04,70.55 277.60,76.00 268.16,70.55 268.16,59.65 277.60,54.20 287.04,59.65" fill="#fdfdfd" stroke="#303030" stroke-width="2" stroke-linejoin="round"/>
<path d="M272.1 65.1 h11 M277.6 59.6 v11" stroke="#1e1e1e" stroke-width="1.8" fill="none"/>
<path d="M261.6 55.6 h-2.2 q-1.8 0 -1.8 1.8 v4" fill="none" stroke="#1e1e1e" stroke-width="1.8"/>
<path d="M253.70000000000002 60.1 h7.8 l-3.9 4.6 z" fill="#1e1e1e"/>
<polygon points="327.53,83.10 318.00,88.60 308.47,83.10 308.47,72.10 318.00,66.60 327.53,72.10" fill="none" stroke="#9fb2cf" stroke-width="1.5" stroke-linejoin="round" stroke-dasharray="3 2.2"/>
<polygon points="343.24,70.55 333.80,76.00 324.36,70.55 324.36,59.65 333.80,54.20 343.24,59.65" fill="#fdfdfd" stroke="#303030" stroke-width="2" stroke-linejoin="round"/>
<text x="333.8" y="69.8" font-size="13" font-weight="bold" fill="#1e1e1e" text-anchor="middle" font-family="'Liberation Serif', serif">1</text>
<path d="M317.3 55.6 h-2.2 q-1.8 0 -1.8 1.8 v4" fill="none" stroke="#1e1e1e" stroke-width="1.8"/>
<path d="M309.40000000000003 60.1 h7.8 l-3.9 4.6 z" fill="#1e1e1e"/>
<polygon points="406.11,80.15 391.30,88.70 376.49,80.15 376.49,63.05 391.30,54.50 406.11,63.05" fill="#fdfdfd" stroke="#303030" stroke-width="2" stroke-linejoin="round"/>
<circle cx="391.3" cy="71.6" r="7.4" fill="none" stroke="#cfcfcf" stroke-width="1.4"/>
<path d="M384.4 80.4 L398.2 62.8" stroke="#cfcfcf" stroke-width="1.4"/>
<circle cx="404.8" cy="84.8" r="5.2" fill="#efefef"/>
<path d="M401.4 81.4 l6.8 6.8 M408.2 81.4 l-6.8 6.8" stroke="#ea4a5c" stroke-width="1.7" fill="none"/>
<polygon points="466.30,83.40 456.60,89.00 446.90,83.40 446.90,72.20 456.60,66.60 466.30,72.20" fill="#f1f6fc" stroke="#84b1e1" stroke-width="1.9" stroke-linejoin="round"/>
<text x="456.6" y="82.6" font-size="13" font-weight="bold" fill="#8fb7e2" text-anchor="middle" font-family="'Liberation Serif', serif">1</text>
<polygon points="481.24,70.45 471.80,75.90 462.36,70.45 462.36,59.55 471.80,54.10 481.24,59.55" fill="#fdfdfd" stroke="#303030" stroke-width="2" stroke-linejoin="round"/>
<text x="471.8" y="69.7" font-size="13" font-weight="bold" fill="#1e1e1e" text-anchor="middle" font-family="'Liberation Serif', serif">1</text>
<path d="M456.6 55.6 h-2.2 q-1.8 0 -1.8 1.8 v4" fill="none" stroke="#1e1e1e" stroke-width="1.8"/>
<path d="M448.70000000000005 60.1 h7.8 l-3.9 4.6 z" fill="#1e1e1e"/>
<polygon points="545.75,83.10 536.40,88.50 527.05,83.10 527.05,72.30 536.40,66.90 545.75,72.30" fill="#fdfdfd" stroke="#303030" stroke-width="1.9" stroke-linejoin="round"/>
<polygon points="554.15,77.00 544.10,82.80 534.05,77.00 534.05,65.40 544.10,59.60 554.15,65.40" fill="#efefef" stroke="#efefef" stroke-width="3.4" stroke-linejoin="round"/>
<polygon points="553.45,76.60 544.10,82.00 534.75,76.60 534.75,65.80 544.10,60.40 553.45,65.80" fill="#fdfdfd" stroke="#303030" stroke-width="1.9" stroke-linejoin="round"/>
<polygon points="561.75,70.70 551.70,76.50 541.65,70.70 541.65,59.10 551.70,53.30 561.75,59.10" fill="#efefef" stroke="#efefef" stroke-width="3.4" stroke-linejoin="round"/>
<polygon points="561.05,70.30 551.70,75.70 542.35,70.30 542.35,59.50 551.70,54.10 561.05,59.50" fill="#fdfdfd" stroke="#303030" stroke-width="1.9" stroke-linejoin="round"/>
<path d="M548.8 62.2 l6.2 6.2 M555 62.2 l-6.2 6.2" stroke="#ef6a7c" stroke-width="1.4" fill="none"/>
<polygon points="632.10,79.80 617.20,88.40 602.30,79.80 602.30,62.60 617.20,54.00 632.10,62.60" fill="#fdfdfd" stroke="#303030" stroke-width="2" stroke-linejoin="round"/>
<polygon points="625.74,69.72 625.74,73.08 623.60,73.02 622.84,74.85 624.40,76.32 622.02,78.70 620.55,77.14 618.72,77.90 618.78,80.04 615.42,80.04 615.48,77.90 613.65,77.14 612.18,78.70 609.80,76.32 611.36,74.85 610.60,73.02 608.46,73.08 608.46,69.72 610.60,69.78 611.36,67.95 609.80,66.48 612.18,64.10 613.65,65.66 615.48,64.90 615.42,62.76 618.78,62.76 618.72,64.90 620.55,65.66 622.02,64.10 624.40,66.48 622.84,67.95 623.60,69.78" fill="#eef6fe" stroke="#3f8dd6" stroke-width="1.6" stroke-linejoin="round"/>
<circle cx="617.1" cy="71.4" r="3.2" fill="none" stroke="#3f8dd6" stroke-width="1.5"/>
<polygon points="713.10,80.00 698.20,88.60 683.30,80.00 683.30,62.80 698.20,54.20 713.10,62.80" fill="#fbfbfb" stroke="#6e6e6e" stroke-width="1.9" stroke-linejoin="round"/>
<g fill="#eef6fe" stroke="#4f97dc" stroke-width="1.2"><rect x="686.2" y="69.6" width="24" height="9"/><path d="M693.4 69.6 v9 M704 69.6 v9 M706.2 69.6 v9 M708.3 69.6 v9" fill="none"/><path d="M688.4 69.6 v-3.6 q0 -1.4 1.4 -1.4 h3 q1.4 0 1.4 1.4 v3.6 M691.4 64.6 v-3"/></g>
<circle cx="773.5" cy="71.4" r="17.1" fill="#fdfdfd" stroke="#2b2b2b" stroke-width="2.3"/>
<circle cx="773.5" cy="62.6" r="1.9" fill="#2f86d6"/>
<rect x="772.1" y="66.6" width="2.9" height="13.8" fill="#2f86d6"/>
<path d="M825.37 68.07 A17.0 17.0 0 0 1 857.76 65.23" fill="none" stroke="#2b2b2b" stroke-width="2"/>
<path d="M858.63 75.13 A17.0 17.0 0 0 1 826.24 77.97" fill="none" stroke="#2b2b2b" stroke-width="2"/>
<path d="M851.36 65.83 L858.36 65.63 L858.56 58.63" fill="none" stroke="#2b2b2b" stroke-width="2" stroke-linejoin="miter"/>
<path d="M832.64 77.37 L825.64 77.57 L825.44 84.57" fill="none" stroke="#2b2b2b" stroke-width="2" stroke-linejoin="miter"/>
</g>
<defs>
<clipPath id="cv"><rect x="237.6" y="211" width="784.8" height="481.4"/></clipPath>
<clipPath id="cin"><rect x="375.7" y="259.7" width="509.9" height="385.4"/></clipPath>
<clipPath id="cout"><path clip-rule="evenodd" d="M237 210 H1023 V693 H237 Z M375.7 259.7 V645.1 H885.6 V259.7 Z"/></clipPath>
<pattern id="xh" width="5" height="5" patternUnits="userSpaceOnUse"><path d="M0 0 L5 5 M5 0 L0 5" stroke="#555" stroke-width="0.55" fill="none"/></pattern>
<pattern id="xhb" width="4" height="4" patternUnits="userSpaceOnUse"><path d="M0 0 L4 4 M4 0 L0 4" stroke="#3d6dd0" stroke-width="0.5" fill="none" stroke-opacity="0.5"/></pattern>
</defs>
<g id="canvas" clip-path="url(#cv)">
<g clip-path="url(#cout)">
<path d="M243.2 214.1 H315 V242.5 H243.2" fill="none" stroke="#1f1f1f" stroke-width="1.5"/>
<path d="M243.2 219.6 H315" fill="none" stroke="#777" stroke-width="0.8"/>
<path d="M312.8 214.1 V242.5" fill="none" stroke="#666" stroke-width="0.8"/>
<path d="M243.2 221.4 h10 M315 221.4 h-10" fill="none" stroke="#1f1f1f" stroke-width="2.4"/>
<path d="M243.2 241.9 h10 M315 241.9 h-10" fill="none" stroke="#1f1f1f" stroke-width="2.2"/>
<rect x="372.7" y="214.1" width="72.5" height="28.4" fill="#fff" stroke="#1f1f1f" stroke-width="1.5"/>
<path d="M372.7 219.6 H445.2" fill="none" stroke="#777" stroke-width="0.8"/>
<path d="M443.0 214.1 V242.5" fill="none" stroke="#666" stroke-width="0.8"/>
<path d="M372.7 221.4 h11.5 M445.2 221.4 h-11.5" fill="none" stroke="#1f1f1f" stroke-width="2.4"/>
<path d="M372.7 241.9 h11.5 M445.2 241.9 h-11.5" fill="none" stroke="#1f1f1f" stroke-width="2.2"/>
<rect x="451.2" y="214.1" width="72.8" height="28.4" fill="#fff" stroke="#1f1f1f" stroke-width="1.5"/>
<path d="M451.2 219.6 H524" fill="none" stroke="#777" stroke-width="0.8"/>
<path d="M521.8 214.1 V242.5" fill="none" stroke="#666" stroke-width="0.8"/>
<path d="M451.2 221.4 h11.5 M524 221.4 h-11.5" fill="none" stroke="#1f1f1f" stroke-width="2.4"/>
<path d="M451.2 241.9 h11.5 M524 241.9 h-11.5" fill="none" stroke="#1f1f1f" stroke-width="2.2"/>
<rect x="581.6" y="214.1" width="72.9" height="28.4" fill="#fff" stroke="#1f1f1f" stroke-width="1.5"/>
<path d="M581.6 219.6 H654.5" fill="none" stroke="#777" stroke-width="0.8"/>
<path d="M652.3 214.1 V242.5" fill="none" stroke="#666" stroke-width="0.8"/>
<path d="M581.6 221.4 h11.5 M654.5 221.4 h-11.5" fill="none" stroke="#1f1f1f" stroke-width="2.4"/>
<path d="M581.6 241.9 h11.5 M654.5 241.9 h-11.5" fill="none" stroke="#1f1f1f" stroke-width="2.2"/>
<rect x="660.2" y="214.1" width="72.8" height="28.4" fill="#fff" stroke="#1f1f1f" stroke-width="1.5"/>
<path d="M660.2 219.6 H733" fill="none" stroke="#777" stroke-width="0.8"/>
<path d="M730.8 214.1 V242.5" fill="none" stroke="#666" stroke-width="0.8"/>
<path d="M660.2 221.4 h11.5 M733 221.4 h-11.5" fill="none" stroke="#1f1f1f" stroke-width="2.4"/>
<path d="M660.2 241.9 h11.5 M733 241.9 h-11.5" fill="none" stroke="#1f1f1f" stroke-width="2.2"/>
<rect x="792.2" y="214.1" width="43.8" height="28.4" fill="#fff" stroke="#1f1f1f" stroke-width="1.5"/>
<path d="M792.2 219.6 H836" fill="none" stroke="#777" stroke-width="0.8"/>
<path d="M833.8 214.1 V242.5" fill="none" stroke="#666" stroke-width="0.8"/>
<path d="M792.2 221.4 h9 M836 221.4 h-9" fill="none" stroke="#1f1f1f" stroke-width="2.4"/>
<path d="M792.2 241.9 h9 M836 241.9 h-9" fill="none" stroke="#1f1f1f" stroke-width="2.2"/>
</g>
<g fill="none" clip-path="url(#cout)"><path d="M277.8 234.5 L277.8 281.5" stroke="#2a2a2a" stroke-width="7.2"/><path d="M277.8 234.5 L277.8 281.5" stroke="#b5b5b5" stroke-width="5.40"/><path d="M277.8 234.5 L277.8 281.5" stroke="#2a2a2a" stroke-width="5.40" stroke-dasharray="1.0 0.9"/></g>
<circle cx="277.8" cy="234.5" r="3.4" fill="#fff" stroke="#1f1f1f" stroke-width="1.1" clip-path="url(#cout)"/>
<g fill="none" clip-path="url(#cout)"><path d="M407.9 234.5 L407.9 281.5" stroke="#2a2a2a" stroke-width="7.2"/><path d="M407.9 234.5 L407.9 281.5" stroke="#b5b5b5" stroke-width="5.40"/><path d="M407.9 234.5 L407.9 281.5" stroke="#2a2a2a" stroke-width="5.40" stroke-dasharray="1.0 0.9"/></g>
<circle cx="407.9" cy="234.5" r="3.4" fill="#fff" stroke="#1f1f1f" stroke-width="1.1" clip-path="url(#cout)"/>
<g fill="none" clip-path="url(#cout)"><path d="M486.5 234.5 L503.5 272" stroke="#2a2a2a" stroke-width="7.2"/><path d="M486.5 234.5 L503.5 272" stroke="#b5b5b5" stroke-width="5.40"/><path d="M486.5 234.5 L503.5 272" stroke="#2a2a2a" stroke-width="5.40" stroke-dasharray="1.0 0.9"/></g>
<circle cx="486.5" cy="234.5" r="3.4" fill="#fff" stroke="#1f1f1f" stroke-width="1.1" clip-path="url(#cout)"/>
<g fill="none" clip-path="url(#cout)"><path d="M617.2 234.5 L617.2 272" stroke="#2a2a2a" stroke-width="7.2"/><path d="M617.2 234.5 L617.2 272" stroke="#b5b5b5" stroke-width="5.40"/><path d="M617.2 234.5 L617.2 272" stroke="#2a2a2a" stroke-width="5.40" stroke-dasharray="1.0 0.9"/></g>
<circle cx="617.2" cy="234.5" r="3.4" fill="#fff" stroke="#1f1f1f" stroke-width="1.1" clip-path="url(#cout)"/>
<g fill="none" clip-path="url(#cout)"><path d="M695.3 234.5 L695.3 272" stroke="#2a2a2a" stroke-width="7.2"/><path d="M695.3 234.5 L695.3 272" stroke="#b5b5b5" stroke-width="5.40"/><path d="M695.3 234.5 L695.3 272" stroke="#2a2a2a" stroke-width="5.40" stroke-dasharray="1.0 0.9"/></g>
<circle cx="695.3" cy="234.5" r="3.4" fill="#fff" stroke="#1f1f1f" stroke-width="1.1" clip-path="url(#cout)"/>
<g fill="none" clip-path="url(#cout)"><path d="M813 234.5 L822.5 271.5" stroke="#2a2a2a" stroke-width="7.2"/><path d="M813 234.5 L822.5 271.5" stroke="#b5b5b5" stroke-width="5.40"/><path d="M813 234.5 L822.5 271.5" stroke="#2a2a2a" stroke-width="5.40" stroke-dasharray="1.0 0.9"/></g>
<circle cx="813" cy="234.5" r="3.4" fill="#fff" stroke="#1f1f1f" stroke-width="1.1" clip-path="url(#cout)"/>
<g clip-path="url(#cout)">
<path d="M243.2 276.4 H376 M243.2 287 H376" fill="none" stroke="#1f1f1f" stroke-width="1.2"/>
<path d="M243.2 275.4 H376 M243.2 288 H376" fill="none" stroke="#555" stroke-width="2.6" stroke-dasharray="0.6 1.3" stroke-opacity="0.7"/>
<path d="M301.5 273.8 V289.6 M369.2 273.8 V289.6" fill="none" stroke="#1f1f1f" stroke-width="1.6"/>
<g fill="none"><path d="M243.4 422.8 H272 C303 423 319.4 436 319.4 450" stroke="#2a2a2a" stroke-width="12"/><path d="M243.4 422.8 H272 C303 423 319.4 436 319.4 450" stroke="#b0b0b0" stroke-width="10.00"/><path d="M243.4 422.8 H272 C303 423 319.4 436 319.4 450" stroke="#2a2a2a" stroke-width="10.00" stroke-dasharray="0.9 0.9"/></g>
<rect x="314.3" y="449.6" width="10" height="8.2" fill="#fff" stroke="#1f1f1f" stroke-width="1"/>
<path d="M317 456 l4 -5" fill="none" stroke="#1f1f1f" stroke-width="0.8"/>
<rect x="307" y="457.8" width="70" height="10.6" fill="#fff" stroke="none"/>
<path d="M376 457.8 H307 V468.4 H376" fill="none" stroke="#1f1f1f" stroke-width="1.3"/>
<path d="M307 456.6 H376 M307 469.6 H376" fill="none" stroke="#555" stroke-width="2.6" stroke-dasharray="0.6 1.3" stroke-opacity="0.7"/>
<path d="M305.6 457 V469" fill="none" stroke="#1f1f1f" stroke-width="1.6"/>
<path d="M243.2 472.3 H376 M243.2 490.3 H376" fill="none" stroke="#1f1f1f" stroke-width="1.3"/>
<path d="M243.2 471.2 H376 M243.2 491.2 H376" fill="none" stroke="#555" stroke-width="2.6" stroke-dasharray="0.6 1.3" stroke-opacity="0.7"/>
<path d="M249.1 470.6 V492 M317 470.6 V492" fill="none" stroke="#1f1f1f" stroke-width="1.7"/>
<path d="M243.2 492.9 H376 M243.2 503.4 H376" fill="none" stroke="#1f1f1f" stroke-width="1.3"/>
<path d="M243.2 504.4 H376" fill="none" stroke="#555" stroke-width="2.6" stroke-dasharray="0.6 1.3" stroke-opacity="0.7"/>
<path d="M295.6 491.4 V505.2 M363.2 491.4 V505.2" fill="none" stroke="#1f1f1f" stroke-width="1.7"/>
<rect x="297" y="548.2" width="66" height="27.4" fill="url(#xh)"/>
<polygon points="363,548.2 376,549 376,575 363,575.6" fill="url(#xh)"/>
<path d="M243.2 548.2 H376 M243.2 575.6 H376" fill="none" stroke="#1f1f1f" stroke-width="1.3"/>
<path d="M243.2 549.4 H297 M243.2 576.8 H297" fill="none" stroke="#555" stroke-width="2.6" stroke-dasharray="0.6 1.3" stroke-opacity="0.7"/>
<path d="M296.8 546.6 V577.2 M299.4 548 V575.6" fill="none" stroke="#1f1f1f" stroke-width="1.4"/>
<path d="M361.2 546 V577.8 M363.6 548 V575.6" fill="none" stroke="#1f1f1f" stroke-width="1.6"/>
<path d="M243.2 580.4 H376 M243.2 592.8 H376" fill="none" stroke="#1f1f1f" stroke-width="1.3"/>
<path d="M247.3 578.8 V594.4 M314.8 578.8 V594.4" fill="none" stroke="#1f1f1f" stroke-width="1.7"/>
<path d="M461.9 645 V692.4 M474.4 645 V677 L477.4 692.4" fill="none" stroke="#1f1f1f" stroke-width="1.2"/>
<path d="M460.4 665.2 H476" fill="none" stroke="#1f1f1f" stroke-width="2"/>
<path d="M460.4 672.2 H476" fill="none" stroke="#1f1f1f" stroke-width="2"/>
<path d="M461 674.4 H475.4 M461 676.4 H475.4" fill="none" stroke="#1f1f1f" stroke-width="1"/>
<path d="M461.8 665.4 h-3.4 v6.6 h3.4" fill="none" stroke="#666" stroke-width="0.9"/>
<path d="M511.7 645 C514 653 519.5 656 519.5 664.5 V692.4" fill="none" stroke="#1f1f1f" stroke-width="1.2"/>
<path d="M544 645 C547.5 651 549.4 657 549.4 664.5 V692.4" fill="none" stroke="#1f1f1f" stroke-width="1.2"/>
<path d="M519.5 664.5 H549.4" fill="none" stroke="#1f1f1f" stroke-width="1.5"/>
<path d="M530.2 645 L515.2 653" fill="none" stroke="#1f1f1f" stroke-width="1.5"/>
<path d="M518.4 666 V692.4 M550.6 666 V692.4" fill="none" stroke="#555" stroke-width="2.6" stroke-dasharray="0.6 1.3" stroke-opacity="0.7"/>
<path d="M597.8 645 V692.4 M615 645 V692.4" fill="none" stroke="#1f1f1f" stroke-width="1.2"/>
<path d="M596.6 645 V692.4 M616.2 645 V692.4" fill="none" stroke="#555" stroke-width="2.6" stroke-dasharray="0.6 1.3" stroke-opacity="0.7"/>
<rect x="633" y="645" width="10" height="21.6" fill="#fff" stroke="#1f1f1f" stroke-width="1.2"/>
<path d="M643 652.2 h4.6 v9.8 h-4.6" fill="none" stroke="#1f1f1f" stroke-width="1.1"/>
<path d="M633.4 671.3 H642.4" fill="none" stroke="#1f1f1f" stroke-width="1.6"/>
<path d="M634.2 666.6 V692.4 M641.6 666.6 V692.4" fill="none" stroke="#1f1f1f" stroke-width="1.2"/>
<path d="M633.2 672 V692.4 M642.6 672 V692.4" fill="none" stroke="#555" stroke-width="2.6" stroke-dasharray="0.6 1.3" stroke-opacity="0.7"/>
<path d="M682.9 645 V692.4 M695.5 645 V692.4" fill="none" stroke="#1f1f1f" stroke-width="1.2"/>
<path d="M681.8 645 V692.4 M696.6 645 V692.4" fill="none" stroke="#555" stroke-width="2.6" stroke-dasharray="0.6 1.3" stroke-opacity="0.7"/>
<path d="M681.6 666 H696.8" fill="none" stroke="#1f1f1f" stroke-width="1.8"/>
<path d="M702.2 645 V692.4 M715 645 V692.4" fill="none" stroke="#1f1f1f" stroke-width="1.2"/>
<path d="M701 645 V692.4 M716.2 645 V692.4" fill="none" stroke="#555" stroke-width="2.6" stroke-dasharray="0.6 1.3" stroke-opacity="0.7"/>
<path d="M700.8 647 H716.4 M700.8 676.2 H716.4" fill="none" stroke="#1f1f1f" stroke-width="1.8"/>
<rect x="715.4" y="652.6" width="6.4" height="6.6" fill="#fff" stroke="#1f1f1f" stroke-width="0.9"/>
<path d="M717 657.6 l3 -3.4" fill="none" stroke="#1f1f1f" stroke-width="0.8"/>
<path d="M845.4 645 V675.2 H874 V645" fill="none" stroke="#1f1f1f" stroke-width="1.4"/>
<path d="M866.2 645 V675 M868.4 662 V675" fill="none" stroke="#1f1f1f" stroke-width="1.1"/>
<path d="M845.4 692.4 V684.4 H874 V692.4 M866.2 684.4 V692.4 M868 684.4 V692.4" fill="none" stroke="#1f1f1f" stroke-width="1.4"/>
</g>
<g fill="none" clip-path="url(#cout)"><path d="M721.8 656 C750 657.5 775 659 800 656 C820 653.5 835 647 852.5 639.5" stroke="#2a2a2a" stroke-width="6.4"/><path d="M721.8 656 C750 657.5 775 659 800 656 C820 653.5 835 647 852.5 639.5" stroke="#a8a8a8" stroke-width="4.60"/><path d="M721.8 656 C750 657.5 775 659 800 656 C820 653.5 835 647 852.5 639.5" stroke="#2a2a2a" stroke-width="4.60" stroke-dasharray="1 0.9"/></g>
<rect x="375.7" y="259.7" width="509.9" height="385.4" fill="#dce6f7"/>
<g clip-path="url(#cin)">
<g fill="none"><path d="M277.8 234.5 L277.8 281.5" stroke="#3a72d8" stroke-width="7.2"/><path d="M277.8 234.5 L277.8 281.5" stroke="#9dbcf0" stroke-width="5.40"/><path d="M277.8 234.5 L277.8 281.5" stroke="#3a72d8" stroke-width="5.40" stroke-dasharray="1.1 1.1"/></g>
<g fill="none"><path d="M407.9 234.5 L407.9 281.5" stroke="#3a72d8" stroke-width="7.2"/><path d="M407.9 234.5 L407.9 281.5" stroke="#9dbcf0" stroke-width="5.40"/><path d="M407.9 234.5 L407.9 281.5" stroke="#3a72d8" stroke-width="5.40" stroke-dasharray="1.1 1.1"/></g>
<g fill="none"><path d="M486.5 234.5 L503.5 272" stroke="#3a72d8" stroke-width="7.2"/><path d="M486.5 234.5 L503.5 272" stroke="#9dbcf0" stroke-width="5.40"/><path d="M486.5 234.5 L503.5 272" stroke="#3a72d8" stroke-width="5.40" stroke-dasharray="1.1 1.1"/></g>
<g fill="none"><path d="M617.2 234.5 L617.2 272" stroke="#3a72d8" stroke-width="7.2"/><path d="M617.2 234.5 L617.2 272" stroke="#9dbcf0" stroke-width="5.40"/><path d="M617.2 234.5 L617.2 272" stroke="#3a72d8" stroke-width="5.40" stroke-dasharray="1.1 1.1"/></g>
<g fill="none"><path d="M695.3 234.5 L695.3 272" stroke="#3a72d8" stroke-width="7.2"/><path d="M695.3 234.5 L695.3 272" stroke="#9dbcf0" stroke-width="5.40"/><path d="M695.3 234.5 L695.3 272" stroke="#3a72d8" stroke-width="5.40" stroke-dasharray="1.1 1.1"/></g>
<g fill="none"><path d="M813 234.5 L822.5 271.5" stroke="#3a72d8" stroke-width="7.2"/><path d="M813 234.5 L822.5 271.5" stroke="#9dbcf0" stroke-width="5.40"/><path d="M813 234.5 L822.5 271.5" stroke="#3a72d8" stroke-width="5.40" stroke-dasharray="1.1 1.1"/></g>
<polygon points="375.7,276.4 465.3,276.4 493,266.3 829.6,266.3 829.6,277.8 493,277.8 465.3,287.2 375.7,287.2" fill="#4c7ed0" fill-opacity="0.45" stroke="#5f86dc" stroke-width="0.7" stroke-dasharray="3 1.2" stroke-opacity="0.8"/>
<path d="M436 274.8 V288.6 M527 264.8 V279.2 M595 264.8 V279.2 M663 264.8 V279.2 M731 264.8 V279.2 M779.6 264.8 V279.2" fill="none" stroke="#3463c8" stroke-width="1.5"/>
<path d="M465.3 276.4 V287.2 M474.5 273 L478 283 M484 269.6 L487 279.8 M493 266.3 V277.8" fill="none" stroke="#5f86dc" stroke-width="0.7"/>
<rect x="461.5" y="295.6" width="61" height="4.8" fill="#4c7ed7" stroke="#3463c8" stroke-width="0.8" stroke-opacity="0.7"/>
<rect x="473" y="300" width="7" height="8.8" fill="#4c7ed7" stroke="#3463c8" stroke-width="0.8" stroke-opacity="0.7"/>
<rect x="502.3" y="300" width="10.2" height="9.4" fill="#4c7ed7" stroke="#3463c8" stroke-width="0.8" stroke-opacity="0.7"/>
<g fill="none"><path d="M507.4 309.4 L509.6 325" stroke="#3a72d8" stroke-width="8"/><path d="M507.4 309.4 L509.6 325" stroke="#9dbcf0" stroke-width="6.20"/><path d="M507.4 309.4 L509.6 325" stroke="#3a72d8" stroke-width="6.20" stroke-dasharray="1.2 1.2"/></g>
<rect x="484" y="324.4" width="10.6" height="7" fill="#dfe8f8" stroke="#4a6fc0" stroke-width="0.8"/>
<rect x="504.4" y="324.4" width="10" height="7" fill="#dfe8f8" stroke="#4a6fc0" stroke-width="0.8"/>
<path d="M487.4 326 l3 4.6 M507.8 326 l3 4.6" fill="none" stroke="#3a5cb0" stroke-width="0.8"/>
<polygon points="474,331.5 575.3,331.5 575.3,291.6 597.2,291.6 597.2,351.5 474,351.5" fill="#4c7ed7" stroke="#3463c8" stroke-width="0.8" stroke-opacity="0.7"/>
<path d="M532 330 v4.4 M532 353 v-4.4 M571 330 v4.4 M571 353 v-4.4" fill="none" stroke="#3463c8" stroke-width="1.5"/>
<path d="M532 331.5 V351.5 M571 331.5 V351.5" fill="none" stroke="#3463c8" stroke-width="0.7"/>
<path d="M573.6 315.6 h4.4 M594.6 315.6 h4.4 M573.6 327.2 h4.4 M594.6 327.2 h4.4" fill="none" stroke="#3463c8" stroke-width="1.4"/>
<polygon points="597.2,291.4 633.2,283 633.2,319.4 597.2,312.2" fill="#4c7ed7" stroke="#3463c8" stroke-width="0.8" stroke-opacity="0.7"/>
<path d="M597.2 289.6 V314 M633.2 281.6 V320.8" fill="none" stroke="#3463c8" stroke-width="1.5"/>
<rect x="634.2" y="285.6" width="6.6" height="31.4" fill="#b6caf0" stroke="#8fabe6" stroke-width="0.6"/>
<rect x="641.3" y="284.4" width="23.4" height="34" fill="#4c7ed7" stroke="#3463c8" stroke-width="0.8" stroke-opacity="0.7"/>
<rect x="653" y="318.4" width="4.6" height="2.2" fill="#4c7ed7" stroke="#3463c8" stroke-width="0.8" stroke-opacity="0.7"/>
<rect x="665" y="285.6" width="6.2" height="31.4" fill="#b6caf0" stroke="#8fabe6" stroke-width="0.6"/>
<rect x="671.3" y="282" width="34.4" height="38.6" fill="#4c7ed7" stroke="#3463c8" stroke-width="0.8" stroke-opacity="0.7"/>
<rect x="671.3" y="282" width="34.4" height="38.6" fill="url(#xhb)"/>
<path d="M675 320.6 V328 A7.4 7.4 0 0 0 682.4 320.6" fill="none" stroke="#3f66c4" stroke-width="0.9"/>
<polygon points="705.6,282 738.8,282 738.8,326.2 740.8,335.6 716.4,335.6 718.8,326.2 718.8,301.9 705.6,301.9" fill="#4c7ed7" stroke="#3463c8" stroke-width="0.8" stroke-opacity="0.7"/>
<path d="M713.6 280.4 V303.4" fill="none" stroke="#3463c8" stroke-width="1.1"/>
<path d="M708.2 280.4 v3.6 M708.2 303.4 v-3.6" fill="none" stroke="#3463c8" stroke-width="1.2"/>
<path d="M716.8 306 h4.4 M736.6 306 h4.4 M716.8 325.8 h4.4 M736.6 325.8 h4.4" fill="none" stroke="#3463c8" stroke-width="1.3"/>
<rect x="845.2" y="265.6" width="28.8" height="72.39999999999998" fill="#4c7ed7" stroke="#3463c8" stroke-width="0.8" stroke-opacity="0.7"/>
<path d="M866.2 265.6 V338" fill="none" stroke="#3463c8" stroke-width="0.9"/>
<path d="M868.2 266.6 v8.6 M868.2 337 v-8.6" fill="none" stroke="#3463c8" stroke-width="1.8"/>
<path d="M847 266.6 v4 M847 337 v-4" fill="none" stroke="#3463c8" stroke-width="1"/>
<rect x="845.2" y="395.2" width="28.8" height="71.0" fill="#4c7ed7" stroke="#3463c8" stroke-width="0.8" stroke-opacity="0.7"/>
<path d="M866.2 395.2 V466.2" fill="none" stroke="#3463c8" stroke-width="0.9"/>
<path d="M868.2 396.2 v8.6 M868.2 465.2 v-8.6" fill="none" stroke="#3463c8" stroke-width="1.8"/>
<path d="M847 396.2 v4 M847 465.2 v-4" fill="none" stroke="#3463c8" stroke-width="1"/>
<rect x="845.2" y="475.6" width="28.8" height="72.0" fill="#4c7ed7" stroke="#3463c8" stroke-width="0.8" stroke-opacity="0.7"/>
<path d="M866.2 475.6 V547.6" fill="none" stroke="#3463c8" stroke-width="0.9"/>
<path d="M868.2 476.6 v8.6 M868.2 546.6 v-8.6" fill="none" stroke="#3463c8" stroke-width="1.8"/>
<path d="M847 476.6 v4 M847 546.6 v-4" fill="none" stroke="#3463c8" stroke-width="1"/>
<rect x="845.2" y="604.2" width="28.8" height="71.79999999999995" fill="#4c7ed7" stroke="#3463c8" stroke-width="0.8" stroke-opacity="0.7"/>
<path d="M866.2 604.2 V676" fill="none" stroke="#3463c8" stroke-width="0.9"/>
<path d="M868.2 605.2 v8.6 M868.2 675 v-8.6" fill="none" stroke="#3463c8" stroke-width="1.8"/>
<path d="M847 605.2 v4 M847 675 v-4" fill="none" stroke="#3463c8" stroke-width="1"/>
<circle cx="852.4" cy="301.2" r="3" fill="none" stroke="#3463c8" stroke-width="0.9"/>
<circle cx="852.4" cy="430.8" r="3" fill="none" stroke="#3463c8" stroke-width="0.9"/>
<circle cx="852.4" cy="509.4" r="3" fill="none" stroke="#3463c8" stroke-width="0.9"/>
<circle cx="852.4" cy="639.6" r="3" fill="none" stroke="#3463c8" stroke-width="0.9"/>
<polygon points="694.4,328.6 706.8,328.6 707.4,461 696.2,489 696.2,646 682.4,646 682.4,489 694.4,461" fill="#4c7ed0" fill-opacity="0.45" stroke="#5f86dc" stroke-width="0.7" stroke-dasharray="3 1.2" stroke-opacity="0.8"/>
<path d="M694.4 337.6 H706.8 M694.4 345.6 H706.8" fill="none" stroke="#5f86dc" stroke-width="0.8"/>
<rect x="694.4" y="337.6" width="12.4" height="8" fill="#4c7ed7" fill-opacity="0.35"/>
<rect x="694.6" y="414" width="12.4" height="13" fill="#4c7ed7" fill-opacity="0.35"/>
<path d="M694.6 416.4 H707 M694.6 419.6 H707 M694.6 422.8 H707 M694.6 426 H707" fill="none" stroke="#5078d4" stroke-width="0.8"/>
<path d="M694.4 461 H707.4" fill="none" stroke="#3463c8" stroke-width="1.2"/>
<path d="M683 489 H696 M690 466 L700.6 480" fill="none" stroke="#5078d4" stroke-width="0.8"/>
<path d="M682.4 527.6 H696.2 M682.4 557.6 H696.2" fill="none" stroke="#5f86dc" stroke-width="0.8"/>
<rect x="682.4" y="536" width="13.8" height="13" fill="#4c7ed7" fill-opacity="0.35"/>
<path d="M682.4 538 H696.2 M682.4 541.2 H696.2 M682.4 544.4 H696.2 M682.4 547.6 H696.2" fill="none" stroke="#5078d4" stroke-width="0.8"/>
<path d="M681.6 598.4 H697" fill="none" stroke="#3463c8" stroke-width="1.3"/>
<polygon points="713.2,342.8 727.9,342.8 727.9,537.6 715.6,565 715.6,646 701.2,646 701.2,565 713.2,537.6" fill="#4c7ed0" fill-opacity="0.45" stroke="#5f86dc" stroke-width="0.7" stroke-dasharray="3 1.2" stroke-opacity="0.8"/>
<path d="M713.2 342.8 H727.9" fill="none" stroke="#3463c8" stroke-width="1.6"/>
<path d="M712.4 402 H728.8 M712.4 470 H728.8" fill="none" stroke="#3463c8" stroke-width="1.5"/>
<path d="M713.2 537.6 H727.9 M701.2 565 H715.6 M708 548 L719.6 556" fill="none" stroke="#5078d4" stroke-width="0.8"/>
<g fill="none"><path d="M728 350.6 C745 352 752 361.5 770 361.5 C806 361 832 322 852 301.2" stroke="#3a72d8" stroke-width="6.6"/><path d="M728 350.6 C745 352 752 361.5 770 361.5 C806 361 832 322 852 301.2" stroke="#a4bfee" stroke-width="4.80"/><path d="M728 350.6 C745 352 752 361.5 770 361.5 C806 361 832 322 852 301.2" stroke="#3a72d8" stroke-width="4.80" stroke-dasharray="0.8 1.4"/></g>
<rect x="728" y="347.4" width="6" height="6.4" fill="#dfe8f8" stroke="#3a5cb0" stroke-width="0.8"/>
<g fill="none"><path d="M728 431 C770 432.6 810 432 852 430.6" stroke="#3a72d8" stroke-width="6.6"/><path d="M728 431 C770 432.6 810 432 852 430.6" stroke="#a4bfee" stroke-width="4.80"/><path d="M728 431 C770 432.6 810 432 852 430.6" stroke="#3a72d8" stroke-width="4.80" stroke-dasharray="0.8 1.4"/></g>
<rect x="728" y="427.8" width="6" height="6.4" fill="#dfe8f8" stroke="#3a5cb0" stroke-width="0.8"/>
<g fill="none"><path d="M721.8 656 C750 657.5 775 659 800 656 C820 653.5 835 647 852.5 639.5" stroke="#3a72d8" stroke-width="6.4"/><path d="M721.8 656 C750 657.5 775 659 800 656 C820 653.5 835 647 852.5 639.5" stroke="#a4bfee" stroke-width="4.60"/><path d="M721.8 656 C750 657.5 775 659 800 656 C820 653.5 835 647 852.5 639.5" stroke="#3a72d8" stroke-width="4.60" stroke-dasharray="0.8 1.4"/></g>
<polygon points="375.7,457.8 644,457.8 644,474 645.4,509 645.4,577.2 629,577.2 629,509 631,469.4 375.7,469.4" fill="#4c7ed0" fill-opacity="0.45" stroke="#5f86dc" stroke-width="0.7" stroke-dasharray="3 1.2" stroke-opacity="0.8"/>
<path d="M443 456.4 V470.8 M511 456.4 V470.8 M579 456.4 V470.8" fill="none" stroke="#3463c8" stroke-width="1.5"/>
<path d="M631 473.4 H644" fill="none" stroke="#3463c8" stroke-width="1.2"/>
<path d="M627 457.8 V469.4" fill="none" stroke="#5f86dc" stroke-width="0.7"/>
<path d="M629 509 H645.4" fill="none" stroke="#5f86dc" stroke-width="0.7"/>
<polygon points="629,577.2 645.4,577.2 645.4,625.4 642.6,646 632.6,646 629,625.4" fill="#4c7ed7" stroke="#3463c8" stroke-width="0.8" stroke-opacity="0.7"/>
<path d="M628 577.2 H646.4 M628 625.4 H646.4" fill="none" stroke="#3463c8" stroke-width="1.3"/>
<polygon points="375.7,472.2 615.4,472.2 615.4,646 596.4,646 596.4,491 375.7,491" fill="#4c7ed0" fill-opacity="0.45" stroke="#5f86dc" stroke-width="0.7" stroke-dasharray="3 1.2" stroke-opacity="0.8"/>
<path d="M384 470.8 V492.4 M452 470.8 V492.4 M520 470.8 V492.4" fill="none" stroke="#3463c8" stroke-width="1.5"/>
<path d="M587.4 472.2 V491" fill="none" stroke="#4a72d0" stroke-width="0.9"/>
<path d="M595.6 562.6 H616.2 M595.6 630.4 H616.2" fill="none" stroke="#3463c8" stroke-width="1.5"/>
<polygon points="375.7,492.8 674,492.8 682.4,491 682.4,512.4 674,504.8 375.7,504.8" fill="#4c7ed0" fill-opacity="0.45" stroke="#5f86dc" stroke-width="0.7" stroke-dasharray="3 1.2" stroke-opacity="0.8"/>
<path d="M430.2 491.4 V506.2 M498.2 491.4 V506.2 M624.8 491.4 V506.2" fill="none" stroke="#3463c8" stroke-width="1.6"/>
<path d="M565.6 492.8 V504.8 M674 492.8 V504.8" fill="none" stroke="#4a72d0" stroke-width="0.8"/>
<rect x="574" y="492.8" width="12.8" height="12" fill="#4c7ed7" fill-opacity="0.35"/>
<path d="M576 492.8 V504.8 M579.2 492.8 V504.8 M582.4 492.8 V504.8 M585.4 492.8 V504.8" fill="none" stroke="#5078d4" stroke-width="0.8"/>
<path d="M682 492 V512" fill="none" stroke="#3463c8" stroke-width="1.6"/>
<rect x="726.6" y="507.2" width="7" height="7.6" fill="#e6edf9" stroke="#4a6fc0" stroke-width="0.8"/>
<path d="M728.2 509.4 l3.6 3.4" fill="none" stroke="#3a5cb0" stroke-width="0.9"/>
<rect x="645.2" y="521.8" width="7" height="7.6" fill="#e6edf9" stroke="#4a6fc0" stroke-width="0.8"/>
<path d="M646.8000000000001 524.0 l3.6 3.4" fill="none" stroke="#3a5cb0" stroke-width="0.9"/>
<polygon points="375.7,549 389.8,551 389.8,574 375.7,575.4" fill="#4c7ed7" stroke="#3463c8" stroke-width="0.8" stroke-opacity="0.7"/>
<rect x="389.8" y="551" width="23.8" height="23" fill="#4c7ed7" stroke="#3463c8" stroke-width="0.8" stroke-opacity="0.7"/>
<rect x="398.4" y="546.6" width="10.6" height="4.4" fill="#4c7ed7" stroke="#3463c8" stroke-width="0.8" stroke-opacity="0.7"/>
<rect x="413.6" y="552.8" width="4.4" height="19.6" fill="#4c7ed7" stroke="#3463c8" stroke-width="0.8" stroke-opacity="0.7"/>
<path d="M389.8 551 V574 M398.6 551 V574" fill="none" stroke="#3463c8" stroke-width="0.8"/>
<polygon points="418,552.2 476.2,552.2 500.9,547.2 535.4,547.2 535.4,627 542.8,639.6 544.6,646 511.6,646 506.8,636 505,627 505,578.2 500.9,578.2 476.2,573.2 418,573.2" fill="#4c7ed0" fill-opacity="0.45" stroke="#5f86dc" stroke-width="0.7" stroke-dasharray="3 1.2" stroke-opacity="0.8"/>
<path d="M476.2 552.2 V573.2 M500.9 547.2 V578.2" fill="none" stroke="#5f86dc" stroke-width="0.8"/>
<path d="M505 582.8 H535.4 M505 603.4 H535.4" fill="none" stroke="#5f86dc" stroke-width="0.8"/>
<path d="M530.2 645 L542.8 639.6" fill="none" stroke="#5078d4" stroke-width="0.8"/>
<polygon points="375.7,581 473.8,581 473.8,646 461.4,646 461.4,593.4 375.7,593.4" fill="#4c7ed7" stroke="#3463c8" stroke-width="0.8" stroke-opacity="0.7"/>
<path d="M382.4 579.6 V594.8 M449.8 579.6 V594.8" fill="none" stroke="#3463c8" stroke-width="1.5"/>
<path d="M459.8 597.6 H475.4" fill="none" stroke="#3463c8" stroke-width="1.5"/>
</g>
<rect x="632" y="610.6" width="107.4" height="7.8" fill="#e9eef9" stroke="#c3c8d4" stroke-width="0.7"/>
<text x="633.4" y="616.6" font-size="5.8" fill="#96a1b8" font-weight="normal" text-anchor="start" textLength="104.4" lengthAdjust="spacingAndGlyphs">Duct Fittings : Rec_Duct_Int50 : Flange_Int50</text>
<rect x="375.7" y="259.7" width="509.9" height="385.4" fill="none" stroke="#5876c8" stroke-width="3" stroke-dasharray="7.4 8.7" stroke-dashoffset="2.8"/>
<rect x="984.6" y="214.8" width="35.4" height="123.4" rx="3.4" fill="#f4f4f4" stroke="#cdcdcd" stroke-width="1"/>
<circle cx="1013.3" cy="221.2" r="3.3" fill="#e4e4e4" stroke="#bdbdbd" stroke-width="1"/>
<path d="M1011.7 219.6 l3.2 3.2 M1014.9 219.6 l-3.2 3.2" stroke="#c8c8c8" stroke-width="0.8"/>
<path d="M988.2 246 C988.2 238 992 234.2 1000 234.2 H1008 Q1011 234.2 1011 237.2 V246 C1011 252.4 1006.6 255.4 999.6 255.4 C992.6 255.4 988.2 252 988.2 246 Z" fill="#f1f1f1" stroke="#b9b9b9" stroke-width="1.1"/>
<circle cx="999.2" cy="244.6" r="5" fill="#fafafa" stroke="#a9a9a9" stroke-width="1.2"/>
<path d="M995.4 248.2 L991.4 252.4" stroke="#b9b9b9" stroke-width="1"/>
<text x="1002.0" y="259.0" font-size="9.6" fill="#8db4d6" font-weight="bold" text-anchor="start" textLength="13.6" lengthAdjust="spacingAndGlyphs">2D</text>
<path d="M999.6 267.8 h6 l-3 3 z" fill="#9a9a9a"/>
<rect x="986" y="275.6" width="32" height="0.8" fill="#dedede"/>
<rect x="993.2" y="286.6" width="8.6" height="1.3" fill="#a9a9a9"/>
<circle cx="1003.6" cy="296.4" r="3.2" fill="#fafafa" stroke="#a5a5a5" stroke-width="1.2"/>
<path d="M1006 298.8 L1010 303" stroke="#a5a5a5" stroke-width="1.6"/>
<path d="M999.6 315.4 h6 l-3 3 z" fill="#9a9a9a"/>
<circle cx="1013" cy="331.4" r="3.3" fill="#e4e4e4" stroke="#bdbdbd" stroke-width="1"/>
<path d="M1011 331.4 h4" stroke="#c4c4c4" stroke-width="0.9"/>
<path d="M886 649.6 V676.2 L892.6 670.2 L897.6 680.8 L902.6 678.6 L897.8 668 L906.2 666.9 Z" fill="#ffffff" stroke="#1a1a1a" stroke-width="1.7" stroke-linejoin="miter"/>
</g>
<g id="status">
<text x="271.4" y="706.8" font-size="11.6" fill="#2a2a2a" font-weight="normal" text-anchor="start" textLength="30.6" lengthAdjust="spacingAndGlyphs">1 : 50</text>
<rect x="331.4" y="695.4" width="18.4" height="13" rx="1.2" fill="#d0d0d0" stroke="#5a5a5a" stroke-width="1.1"/>
<path d="M333 698.4 h15 M333 701.4 h15 M333 704.4 h15" stroke="#8a8a8a" stroke-width="1" stroke-dasharray="1.5 1.5"/>
<path d="M355.6 701 l5 -4.2 h11.6 v8 l-4.6 4.2 h-12 z" fill="#eeeeee" stroke="#5a5a5a" stroke-width="1.1" stroke-linejoin="round"/>
<path d="M355.6 701 h12 v8 M367.6 701 l4.6 -4.2" fill="none" stroke="#5a5a5a" stroke-width="1.1"/>
<circle cx="385.6" cy="701.4" r="4.4" fill="#ffe36a" stroke="#e0a11a" stroke-width="1.3"/>
<path d="M385.6 694 v2 M385.6 707 v2 M378.4 701.4 h2 M380.6 696.4 l1.4 1.4 M390.6 696.4 l-1.4 1.4 M380.6 706.4 l1.4 -1.4" stroke="#e0a11a" stroke-width="1.2"/>
<path d="M389.6 703 l6 6 M395.6 703 l-6 6" stroke="#e23b30" stroke-width="2"/>
<circle cx="411" cy="700.2" r="4.6" fill="#eaf3fc" stroke="#5d8fc4" stroke-width="1.3"/>
<path d="M405.6 708.6 h9" stroke="#4a4a4a" stroke-width="1.6"/>
<path d="M415 703 l6 6 M421 703 l-6 6" stroke="#e23b30" stroke-width="2"/>
<path d="M430.4 708.4 v-8 q0 -2.6 2.6 -2.6 h11.4" fill="none" stroke="#2f7fc8" stroke-width="3.2"/>
<rect x="426.6" y="703.6" width="3" height="3.4" fill="#555"/>
<rect x="435.4" y="701.8" width="6.4" height="4.4" fill="#f8d9d6" stroke="#d2453c" stroke-width="0.9"/>
<path d="M454.6 708.4 v-8 q0 -2.6 2.6 -2.6 h7" fill="none" stroke="#2f7fc8" stroke-width="3.2"/>
<rect x="450.8" y="703.6" width="3" height="3.4" fill="#555"/>
<rect x="459" y="701.8" width="4" height="4.4" fill="#f8d9d6" stroke="#d2453c" stroke-width="0.9"/>
<ellipse cx="465.6" cy="700.6" rx="2.8" ry="3.6" fill="#ffd96a" stroke="#d9a520" stroke-width="0.9"/>
<rect x="464.2" y="704.4" width="2.8" height="3" fill="#8a8a8a"/>
<path d="M475.4 699.2 q2.4 -1.4 3.4 1.6 q1 6 5 5.4 q3.6 -0.6 3 -4.4 M483.6 699.6 q3 -3.2 6.6 0 q3.4 3.4 1.2 6.2 q-2.4 2.4 -5.4 0.4" fill="none" stroke="#555" stroke-width="1.3"/>
<ellipse cx="507.8" cy="701.4" rx="3.4" ry="3.8" fill="#d8eafb" stroke="#5d93d2" stroke-width="1.2"/>
<rect x="506.2" y="705.4" width="3.2" height="2.6" fill="#7a8a9a"/>
<rect x="524.6" y="698.6" width="14.6" height="10" fill="none" stroke="#2d2d2d" stroke-width="1.5" stroke-dasharray="2.4 1.4"/>
<circle cx="536.4" cy="705.6" r="2.6" fill="#f1f1f1" stroke="#2d2d2d" stroke-width="1.3"/>
<path d="M548 708.8 v-7.4 l5 -3.6 h7.4 v11" fill="#f3d9d6" stroke="#b3433c" stroke-width="1"/>
<path d="M551.6 699.4 v9.4 M555.2 698 v10.8 M548 704 h12" stroke="#b3433c" stroke-width="0.8"/>
<path d="M548.4 700.6 l5 -3.6 h7" fill="none" stroke="#666" stroke-width="1.1"/>
<ellipse cx="562.4" cy="701.8" rx="3" ry="3.6" fill="#d8eafb" stroke="#5d93d2" stroke-width="1.1"/>
<rect x="561" y="705.6" width="2.8" height="2.6" fill="#7a8a9a"/>
<path d="M572 696.4 v12.4 M588.6 696.4 v6 M572 698.6 h16.6" fill="none" stroke="#555" stroke-width="1.2"/>
<path d="M573.6 705 h7" stroke="#999" stroke-width="0.8" stroke-dasharray="1.4 1"/>
<rect x="581.6" y="703.4" width="7.4" height="5.4" fill="#8c8c8c" stroke="#5e5e5e" stroke-width="0.8"/>
<path d="M583.2 703.4 v-1.4 q2 -2.4 4.2 0 v1.4" fill="none" stroke="#5e5e5e" stroke-width="1"/>
<rect x="642.2" y="697.6" width="19" height="10.4" fill="#a3a3a3"/>
<path d="M1038 706.4 h1.4 M1035.4 708.8 h1.4 M1038 708.8 h1.4 M1040.4 704 h1.4 M1040.4 706.4 h1.4 M1040.4 708.8 h1.4" stroke="#c2c2c2" stroke-width="1.3"/>
</g>
</g>
</svg>
</body></html>
